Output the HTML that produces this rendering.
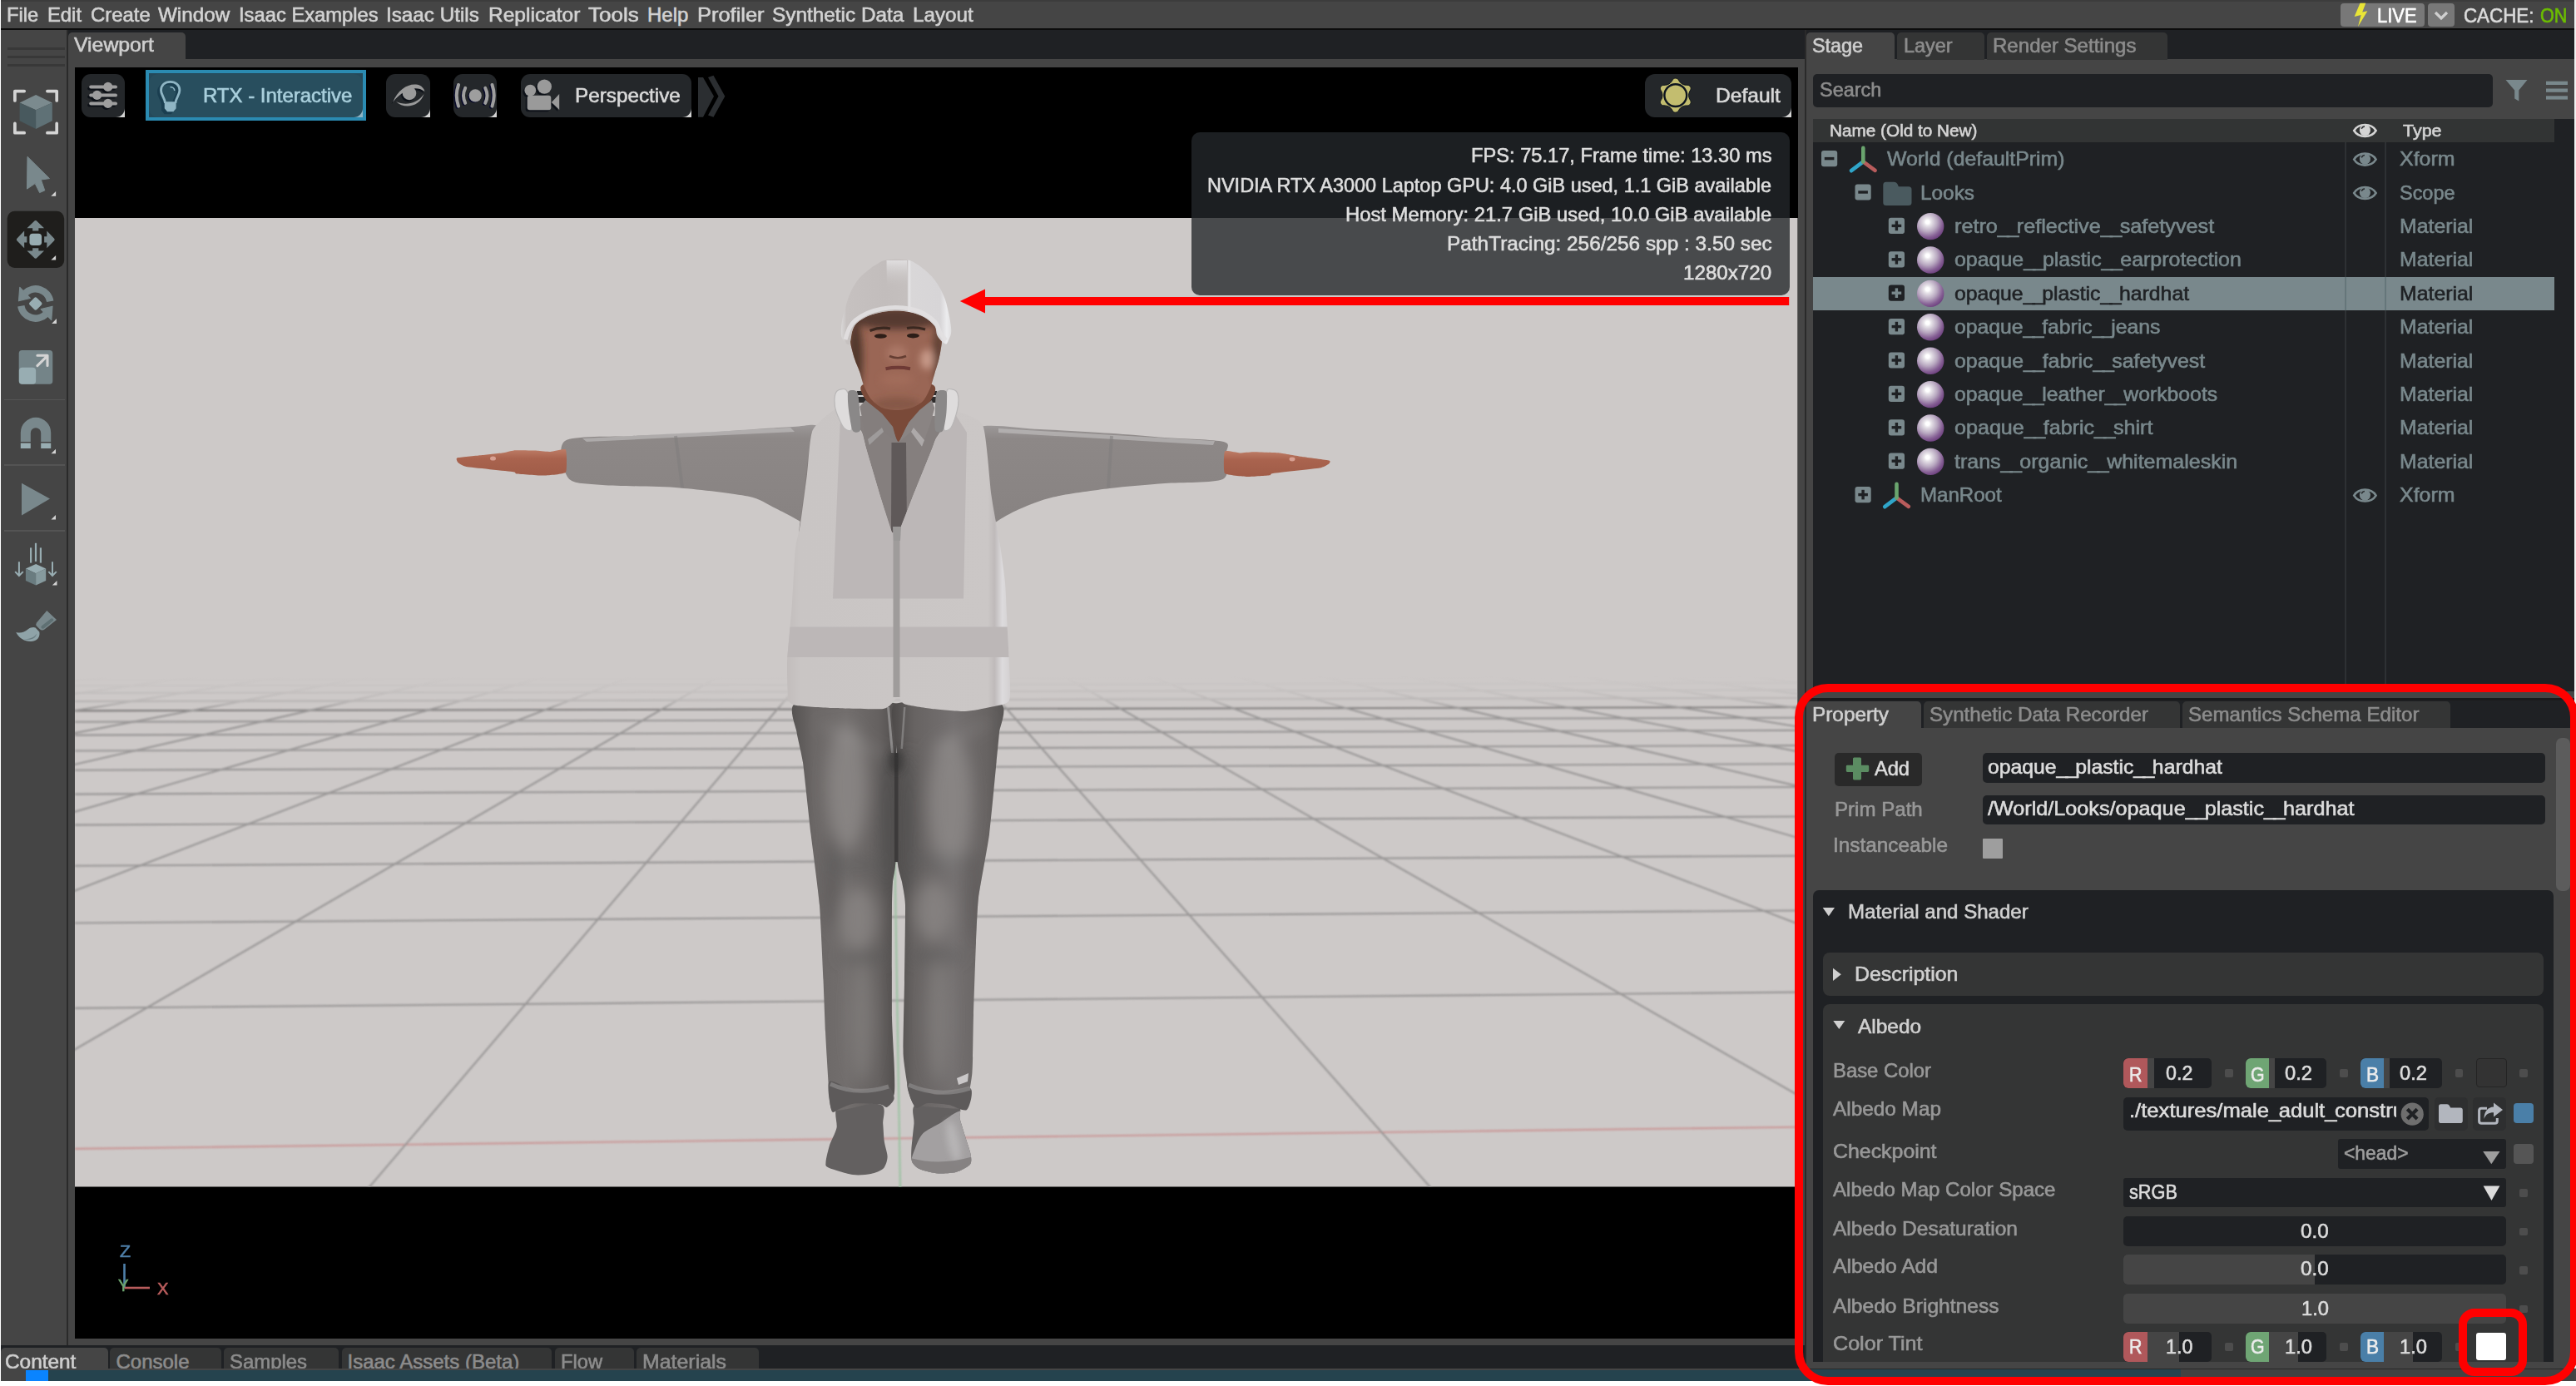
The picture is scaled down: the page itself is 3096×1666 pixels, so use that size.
<!DOCTYPE html><html><head><meta charset="utf-8"><title>Isaac Sim</title><style>
html,body{margin:0;padding:0;background:#fff}
body{width:3096px;height:1666px;position:relative;overflow:hidden;font-family:"Liberation Sans",sans-serif}
.a{position:absolute;display:block}
.t{position:absolute;white-space:nowrap;transform-origin:0 0;line-height:1;display:block;-webkit-text-stroke-width:0.6px}
</style></head><body>
<div class="a" style="left:1.00px;top:0.00px;width:3095.00px;height:1646.00px;background:#454545;"></div>
<div class="a" style="left:1.00px;top:0.00px;width:3095.00px;height:1.50px;background:#3c3c3c;"></div>
<span class="t" style="left:8.40px;top:6.00px;font-size:24px;color:#d2d2d2;transform:scaleX(0.9878);">File</span>
<span class="t" style="left:56.80px;top:6.00px;font-size:24px;color:#d2d2d2;transform:scaleX(0.9914);">Edit</span>
<span class="t" style="left:108.50px;top:6.00px;font-size:24px;color:#d2d2d2;transform:scaleX(0.9967);">Create</span>
<span class="t" style="left:190.00px;top:6.00px;font-size:24px;color:#d2d2d2;transform:scaleX(1.0098);">Window</span>
<span class="t" style="left:286.50px;top:6.00px;font-size:24px;color:#d2d2d2;transform:scaleX(0.9899);">Isaac Examples</span>
<span class="t" style="left:464.40px;top:6.00px;font-size:24px;color:#d2d2d2;transform:scaleX(1.0100);">Isaac Utils</span>
<span class="t" style="left:586.50px;top:6.00px;font-size:24px;color:#d2d2d2;transform:scaleX(1.0217);">Replicator</span>
<span class="t" style="left:707.00px;top:6.00px;font-size:24px;color:#d2d2d2;transform:scaleX(1.0834);">Tools</span>
<span class="t" style="left:778.00px;top:6.00px;font-size:24px;color:#d2d2d2;">Help</span>
<span class="t" style="left:837.60px;top:6.00px;font-size:24px;color:#d2d2d2;transform:scaleX(1.0602);">Profiler</span>
<span class="t" style="left:928.40px;top:6.00px;font-size:24px;color:#d2d2d2;transform:scaleX(1.0148);">Synthetic Data</span>
<span class="t" style="left:1097.00px;top:6.00px;font-size:24px;color:#d2d2d2;transform:scaleX(1.0089);">Layout</span>
<div class="a" style="left:2813.40px;top:3.75px;width:100.60px;height:28.15px;background:#787878;border-radius:4px;"></div>
<svg class="a" style="left:2827.00px;top:3.00px;" width="21.00" height="30.00" viewBox="0 0 21 30"><path d="M9.5 0.7 L16.3 0.7 L12.2 11.6 L18.4 10.2 L7 28.9 L10.6 14.9 L2.6 17 Z" fill="#e9e437"/></svg>
<span class="t" style="left:2856.50px;top:7.00px;font-size:24px;color:#ffffff;transform:scaleX(0.9129);">LIVE</span>
<div class="a" style="left:2918.40px;top:3.75px;width:31.85px;height:28.15px;background:#787878;border-radius:4px;"></div>
<svg class="a" style="left:2918.40px;top:3.75px;" width="32.00" height="28.00" viewBox="0 0 32 28"><path d="M9 11 L16 18 L23 11" fill="none" stroke="#cfcfcf" stroke-width="3.2"/></svg>
<span class="t" style="left:2960.90px;top:7.00px;font-size:24px;color:#dcdcdc;transform:scaleX(0.9302);">CACHE:</span>
<span class="t" style="left:3052.75px;top:7.00px;font-size:24px;color:#6cbd00;transform:scaleX(0.9028);">ON</span>
<div class="a" style="left:1.00px;top:33.50px;width:3093.00px;height:2.70px;background:#0c0c0c;"></div>
<div class="a" style="left:3093.80px;top:0.00px;width:2.20px;height:1660.00px;background:#f2f2f2;"></div>
<div class="a" style="left:80.00px;top:36.20px;width:2.00px;height:1580.80px;background:#2a2a2a;"></div>
<div class="a" style="left:9.00px;top:56.50px;width:68.50px;height:3.00px;background:#383838;"></div>
<div class="a" style="left:9.00px;top:66.50px;width:68.50px;height:3.00px;background:#383838;"></div>
<div class="a" style="left:9.00px;top:76.50px;width:68.50px;height:3.00px;background:#383838;"></div>
<div class="a" style="left:5.00px;top:479.60px;width:73.00px;height:1.60px;background:#545454;"></div>
<div class="a" style="left:5.00px;top:558.20px;width:73.00px;height:1.60px;background:#545454;"></div>
<div class="a" style="left:5.00px;top:637.20px;width:73.00px;height:1.60px;background:#545454;"></div>
<div class="a" style="left:82.00px;top:36.20px;width:2086.75px;height:35.10px;background:#1f2124;"></div>
<div class="a" style="left:82.00px;top:38.50px;width:141.00px;height:32.80px;background:#454545;border-radius:5px 5px 0 0;"></div><span class="t" style="left:88.50px;top:42.00px;font-size:24px;color:#cfcfcf;transform:scaleX(1.0329);">Viewport</span>
<div class="a" style="left:90.00px;top:81.00px;width:2070.50px;height:1528.00px;background:#000;"></div>
<div class="a" style="left:2168.75px;top:36.20px;width:1.75px;height:1609.80px;background:#2a2a2a;"></div>
<div class="a" style="left:2170.50px;top:36.20px;width:923.50px;height:35.30px;background:#1f2124;"></div>
<div class="a" style="left:2170.50px;top:38.50px;width:106.50px;height:33.00px;background:#454545;border-radius:5px 5px 0 0;"></div><span class="t" style="left:2177.50px;top:43.00px;font-size:24px;color:#cfcfcf;transform:scaleX(0.9726);">Stage</span>
<div class="a" style="left:2279.50px;top:38.50px;width:105.00px;height:33.00px;background:#343535;border-radius:5px 5px 0 0;"></div><span class="t" style="left:2287.50px;top:43.00px;font-size:24px;color:#8c8c8c;transform:scaleX(0.9744);">Layer</span>
<div class="a" style="left:2387.50px;top:38.50px;width:217.10px;height:33.00px;background:#343535;border-radius:5px 5px 0 0;"></div><span class="t" style="left:2394.50px;top:43.00px;font-size:24px;color:#8c8c8c;transform:scaleX(1.0023);">Render Settings</span>
<div class="a" style="left:1.00px;top:1617.00px;width:2167.75px;height:27.75px;background:#1f2124;"></div>
<div class="a" style="left:1px;top:1620px;width:128.6px;height:24.75px;overflow:hidden;background:#454545;border-radius:5px 5px 0 0"><span class="t" style="left:4.60px;top:5.00px;font-size:24px;color:#cfcfcf;transform:scaleX(1.0159);">Content</span></div>
<div class="a" style="left:132.4px;top:1620px;width:133.6px;height:24.75px;overflow:hidden;background:#343535;border-radius:5px 5px 0 0"><span class="t" style="left:7.10px;top:5.00px;font-size:24px;color:#8c8c8c;">Console</span></div>
<div class="a" style="left:269px;top:1620px;width:138px;height:24.75px;overflow:hidden;background:#343535;border-radius:5px 5px 0 0"><span class="t" style="left:7.00px;top:5.00px;font-size:24px;color:#8c8c8c;transform:scaleX(0.9959);">Samples</span></div>
<div class="a" style="left:410.8px;top:1620px;width:252.2px;height:24.75px;overflow:hidden;background:#343535;border-radius:5px 5px 0 0"><span class="t" style="left:6.70px;top:5.00px;font-size:24px;color:#8c8c8c;">Isaac Assets (Beta)</span></div>
<div class="a" style="left:667px;top:1620px;width:95px;height:24.75px;overflow:hidden;background:#343535;border-radius:5px 5px 0 0"><span class="t" style="left:6.50px;top:5.00px;font-size:24px;color:#8c8c8c;transform:scaleX(0.9867);">Flow</span></div>
<div class="a" style="left:765px;top:1620px;width:146.70000000000005px;height:24.75px;overflow:hidden;background:#343535;border-radius:5px 5px 0 0"><span class="t" style="left:7.00px;top:5.00px;font-size:24px;color:#8c8c8c;transform:scaleX(1.0374);">Materials</span></div>
<div class="a" style="left:1.00px;top:1644.75px;width:3095.00px;height:14.95px;background:#454545;"></div>
<div class="a" style="left:31.00px;top:1647.20px;width:2137.75px;height:12.50px;background:#25434e;"></div>
<div class="a" style="left:2168.75px;top:1646.00px;width:452.00px;height:13.70px;background:#25434e;"></div>
<div class="a" style="left:2620.75px;top:1646.00px;width:473.25px;height:13.70px;background:#424242;"></div>
<div class="a" style="left:31.00px;top:1647.20px;width:26.75px;height:12.50px;background:#0a84ff;"></div>
<div class="a" style="left:0.00px;top:1659.70px;width:3096.00px;height:6.30px;background:#fff;"></div>
<svg class="a" style="left:0.00px;top:100.00px;" width="80.00" height="700.00" viewBox="0 100 80 700"><g fill="none" stroke="#d4d4d4" stroke-width="3.7" stroke-linecap="round" stroke-linejoin="round"><path d="M29.2 109.6 L17.9 109.6 L17.9 120.89999999999999"/><path d="M56.900000000000006 109.6 L68.2 109.6 L68.2 120.89999999999999"/><path d="M29.2 159.7 L17.9 159.7 L17.9 148.39999999999998"/><path d="M56.900000000000006 159.7 L68.2 159.7 L68.2 148.39999999999998"/></g><path d="M43.1 113.9 L62.8 123.4 L43.1 132.3 L23.6 123.4Z" fill="#7b8a8e"/><path d="M23.6 123.4 L43.1 132.3 L43.1 155.1 L23.6 145.3Z" fill="#48595e"/><path d="M62.8 123.4 L43.1 132.3 L43.1 155.1 L62.8 145.3Z" fill="#5f7176"/><path d="M33 188.3 L32.5 227.1 L42.2 220.6 L47.6 231.6 L53.8 228.9 L49.3 216 L59.5 214.6Z" fill="#79888c" stroke="#79888c" stroke-width="1" stroke-linejoin="round"/><path d="M67.1 229.89999999999998 L67.1 235.7 L61.3 235.7Z" fill="#d4d4d4"/><rect x="8.66" y="253.8" width="68.5" height="68.2" rx="9" fill="#1f1e1c"/><g transform="rotate(0 42.76 287.9)"><path d="M42.76 265.0 Q43.76 265.0 44.76 266.2 L53.06 274.29999999999995 L46.36 274.29999999999995 L46.36 277.5 L39.16 277.5 L39.16 274.29999999999995 L32.459999999999994 274.29999999999995 L40.76 266.2 Q41.76 265.0 42.76 265.0Z" fill="#79888c"/></g><g transform="rotate(90 42.76 287.9)"><path d="M42.76 265.0 Q43.76 265.0 44.76 266.2 L53.06 274.29999999999995 L46.36 274.29999999999995 L46.36 277.5 L39.16 277.5 L39.16 274.29999999999995 L32.459999999999994 274.29999999999995 L40.76 266.2 Q41.76 265.0 42.76 265.0Z" fill="#79888c"/></g><g transform="rotate(180 42.76 287.9)"><path d="M42.76 265.0 Q43.76 265.0 44.76 266.2 L53.06 274.29999999999995 L46.36 274.29999999999995 L46.36 277.5 L39.16 277.5 L39.16 274.29999999999995 L32.459999999999994 274.29999999999995 L40.76 266.2 Q41.76 265.0 42.76 265.0Z" fill="#79888c"/></g><g transform="rotate(270 42.76 287.9)"><path d="M42.76 265.0 Q43.76 265.0 44.76 266.2 L53.06 274.29999999999995 L46.36 274.29999999999995 L46.36 277.5 L39.16 277.5 L39.16 274.29999999999995 L32.459999999999994 274.29999999999995 L40.76 266.2 Q41.76 265.0 42.76 265.0Z" fill="#79888c"/></g><rect x="35.46" y="280.79999999999995" width="14.6" height="14.2" rx="3.8" fill="#98adb2"/><path d="M67.1 306.90000000000003 L67.1 312.6 L61.39999999999999 312.6Z" fill="#d4d4d4"/><path d="M64.39 361.57 A21.9 21.9 0 0 0 27.27 349.51 L33.21 355.45 A13.5 13.5 0 0 1 56.09 362.89Z" fill="#79888c"/><path d="M36.30 358.31 L23.80 345.36 L22.51 361.79Z" fill="#79888c" stroke="#79888c" stroke-width="1.2" stroke-linejoin="round"/><path d="M21.13 368.43 A21.9 21.9 0 0 0 58.25 380.49 L52.31 374.55 A13.5 13.5 0 0 1 29.43 367.11Z" fill="#79888c"/><path d="M49.22 371.69 L61.72 384.64 L63.01 368.21Z" fill="#79888c" stroke="#79888c" stroke-width="1.2" stroke-linejoin="round"/><rect x="36.66" y="358.9" width="12.2" height="12.2" rx="2.2" fill="#98adb2" transform="rotate(45 42.76 365)"/><path d="M68 383.09999999999997 L68 388.9 L62.2 388.9Z" fill="#d4d4d4"/><rect x="22.7" y="421" width="40.6" height="40.8" rx="3.8" fill="#748488"/><rect x="22.9" y="441.8" width="20.2" height="20" rx="3.8" fill="#98adb2"/><path d="M44.9 439.6 L56.3 428.3 M44.9 427.3 L57 427.3 L57 439.4" fill="none" stroke="#d4d4d4" stroke-width="3.1" stroke-linecap="round" stroke-linejoin="round"/><path d="M24.8 531 L24.8 520 A18.2 18.2 0 0 1 61.2 520 L61.2 531 L49.2 531 L49.2 520.5 A6.2 6.2 0 0 0 36.8 520.5 L36.8 531Z" fill="#79888c"/><rect x="24.8" y="532.6" width="12" height="6.4" fill="#98adb2"/><rect x="49.2" y="532.6" width="12" height="6.4" fill="#98adb2"/><path d="M67 539.8 L67 545.3 L61.5 545.3Z" fill="#d4d4d4"/><path d="M26 580.8 L26 619.5 L60 599.6Z" fill="#79888c"/><path d="M67 619.0 L67 624.5 L61.5 624.5Z" fill="#d4d4d4"/><path d="M43.1 677.9 L55.2 683.6 L43.1 689.3 L30.9 683.6Z" fill="#98adb2"/><path d="M30.9 683.6 L43.1 689.3 L43.1 703.6 L30.9 697.9Z" fill="#6a7c80"/><path d="M55.2 683.6 L43.1 689.3 L43.1 703.6 L55.2 697.9Z" fill="#869a9e"/><g stroke="#98adb2" stroke-width="2.2" fill="none"><path d="M37.1 658.4 L37.1 676.6"/><path d="M43 652.8 L43 674.9"/><path d="M48.9 658.4 L48.9 676.6"/></g><g stroke="#98adb2" stroke-width="2" fill="none"><path d="M22.9 675.2 L22.9 691.5 M18.2 687.1 L22.9 692 L27.8 687.1"/><path d="M63 675.2 L63 691.5 M58.3 687.1 L63 692 L67.8 687.1"/></g><path d="M68.5 697.9 L68.5 703.6 L62.8 703.6Z" fill="#d4d4d4"/><path d="M56.3 734 L68 745 L53.5 756.5 Q50.5 758.8 47.5 756 L44 752.5 Q42.6 750.5 44 748.5Z" fill="#79888c"/><path d="M63.2 743.6 Q65.3 745 63.6 746.6 L53 755.3 Q50.8 756.6 49.6 754.8 Q48.8 753.3 50.5 752 L61 743.8 Q62.2 743 63.2 743.6Z" fill="#5f7073"/><path d="M42.6 754.5 C40.5 753.6 37 753.8 33.5 756.5 C29 760 25 761.5 19.3 760 C22 766 29 771.5 37.5 771 C44 770.5 48.5 766.5 47.3 759.5Z" fill="#8fa3a8"/><path d="M28.5 768 C35 768.5 41.5 766.5 44 761.5 C43.5 767 37 770.5 28.5 768Z" fill="#6a7d82"/></svg>
<svg class="a" style="left:90px;top:262px" width="2070.5" height="1164.5" viewBox="90 262 2070.5 1164.5"><defs>
<linearGradient id="gfade" x1="0" y1="0" x2="0" y2="1" gradientUnits="userSpaceOnUse" gradientTransform="translate(0,800) scale(1,140)"><stop offset="0.0857" stop-color="#000000"/><stop offset="0.1571" stop-color="#121212"/><stop offset="0.2214" stop-color="#2b2b2b"/><stop offset="0.2929" stop-color="#545454"/><stop offset="0.3357" stop-color="#999999"/><stop offset="0.3643" stop-color="#f2f2f2"/><stop offset="0.3786" stop-color="#ffffff"/><stop offset="1.0000" stop-color="#ffffff"/></linearGradient>
<mask id="gm" maskUnits="userSpaceOnUse" x="90" y="262" width="2071" height="1165"><rect x="90" y="800" width="2071" height="700" fill="url(#gfade)"/></mask>
<linearGradient id="jeansL" x1="0" y1="0" x2="1" y2="0"><stop offset="0" stop-color="#565352"/><stop offset="0.2" stop-color="#6b6766"/><stop offset="0.5" stop-color="#726e6d"/><stop offset="0.8" stop-color="#656160"/><stop offset="1" stop-color="#4d4a49"/></linearGradient>
<linearGradient id="jeansR" x1="0" y1="0" x2="1" y2="0"><stop offset="0" stop-color="#4d4a49"/><stop offset="0.2" stop-color="#676362"/><stop offset="0.55" stop-color="#747070"/><stop offset="0.85" stop-color="#676362"/><stop offset="1" stop-color="#595655"/></linearGradient>
<linearGradient id="vestg" x1="0" y1="0" x2="1" y2="0"><stop offset="0" stop-color="#c2bdbc"/><stop offset="0.06" stop-color="#c9c5c4"/><stop offset="0.5" stop-color="#cac6c5"/><stop offset="0.9" stop-color="#cbc7c6"/><stop offset="0.93" stop-color="#bfbaba"/><stop offset="0.965" stop-color="#dddbdd"/><stop offset="1" stop-color="#d3d0d1"/></linearGradient>
<linearGradient id="helm" x1="0" y1="0" x2="1" y2="0"><stop offset="0" stop-color="#dad8d8"/><stop offset="0.05" stop-color="#c6c1c0"/><stop offset="0.4" stop-color="#c2bdbc"/><stop offset="0.6" stop-color="#c4bfbe"/><stop offset="0.615" stop-color="#e6e5e7"/><stop offset="0.64" stop-color="#d9d7d8"/><stop offset="0.9" stop-color="#d7d5d7"/><stop offset="0.96" stop-color="#ececee"/><stop offset="1" stop-color="#e0dfe0"/></linearGradient>
<radialGradient id="face" cx="0.5" cy="0.45" r="0.6"><stop offset="0" stop-color="#a77462"/><stop offset="0.55" stop-color="#8b5d4c"/><stop offset="1" stop-color="#4e352c"/></radialGradient>
<linearGradient id="armL" x1="0" y1="0" x2="0" y2="1"><stop offset="0" stop-color="#9c9898"/><stop offset="0.12" stop-color="#8d8887"/><stop offset="1" stop-color="#878281"/></linearGradient>
<linearGradient id="handg" x1="0" y1="0" x2="0" y2="1"><stop offset="0" stop-color="#bd7c66"/><stop offset="0.35" stop-color="#a9634e"/><stop offset="1" stop-color="#a05c48"/></linearGradient>
<filter id="bl" x="-50%" y="-50%" width="200%" height="200%"><feGaussianBlur stdDeviation="9"/></filter><filter id="bl2" x="-50%" y="-50%" width="200%" height="200%"><feGaussianBlur stdDeviation="4"/></filter><filter id="blg" filterUnits="userSpaceOnUse" x="80" y="780" width="2100" height="660"><feGaussianBlur stdDeviation="1.1"/></filter><linearGradient id="ridge" x1="0" y1="0" x2="0" y2="1"><stop offset="0" stop-color="#e0dedf"/><stop offset="1" stop-color="#c8c4c3" stop-opacity="0"/></linearGradient></defs><rect x="90" y="262" width="2070.5" height="1164.5" fill="#cdc9c8"/><g mask="url(#gm)" stroke-width="2.1" opacity="0.85" fill="none" filter="url(#blg)"><line x1="90" y1="1380.9" x2="2160.5" y2="1354.7" stroke="#c98d8d"/><line x1="90" y1="1211.9" x2="2160.5" y2="1192.6" stroke="#8f8d8d"/><line x1="90" y1="1109.5" x2="2160.5" y2="1094.5" stroke="#8f8d8d"/><line x1="90" y1="1040.8" x2="2160.5" y2="1028.7" stroke="#8f8d8d"/><line x1="90" y1="991.6" x2="2160.5" y2="981.5" stroke="#8f8d8d"/><line x1="90" y1="954.6" x2="2160.5" y2="946.0" stroke="#8f8d8d"/><line x1="90" y1="925.7" x2="2160.5" y2="918.3" stroke="#8f8d8d"/><line x1="90" y1="902.5" x2="2160.5" y2="896.1" stroke="#8f8d8d"/><line x1="90" y1="883.6" x2="2160.5" y2="877.9" stroke="#8f8d8d"/><line x1="90" y1="867.8" x2="2160.5" y2="862.8" stroke="#8f8d8d"/><line x1="90" y1="854.4" x2="2160.5" y2="849.9" stroke="#6f6d6d"/><line x1="90" y1="842.9" x2="2160.5" y2="838.9" stroke="#8f8d8d"/><line x1="90" y1="832.9" x2="2160.5" y2="829.3" stroke="#8f8d8d"/><line x1="90" y1="824.2" x2="2160.5" y2="821.0" stroke="#8f8d8d"/><line x1="90" y1="816.5" x2="2160.5" y2="813.6" stroke="#8f8d8d"/><line x1="90" y1="809.6" x2="2160.5" y2="807.0" stroke="#8f8d8d"/><line x1="90" y1="803.5" x2="2160.5" y2="801.1" stroke="#8f8d8d"/><line x1="90" y1="798.0" x2="2160.5" y2="795.8" stroke="#8f8d8d"/><line x1="90" y1="793.0" x2="2160.5" y2="791.0" stroke="#8f8d8d"/><line x1="90" y1="788.4" x2="2160.5" y2="786.7" stroke="#8f8d8d"/><line x1="90" y1="784.3" x2="2160.5" y2="782.7" stroke="#8f8d8d"/><line x1="90" y1="780.5" x2="2160.5" y2="779.1" stroke="#8f8d8d"/><line x1="90" y1="776.9" x2="2160.5" y2="775.7" stroke="#8f8d8d"/><line x1="90" y1="773.7" x2="2160.5" y2="772.6" stroke="#8f8d8d"/><line x1="90" y1="770.7" x2="2160.5" y2="769.7" stroke="#8f8d8d"/><line x1="90" y1="767.9" x2="2160.5" y2="767.1" stroke="#8f8d8d"/><line x1="90" y1="765.3" x2="2160.5" y2="764.6" stroke="#8f8d8d"/><line x1="90" y1="762.9" x2="2160.5" y2="762.3" stroke="#8f8d8d"/><line x1="90" y1="760.7" x2="2160.5" y2="760.1" stroke="#8f8d8d"/><line x1="90" y1="758.5" x2="2160.5" y2="758.1" stroke="#8f8d8d"/><line x1="90" y1="756.6" x2="2160.5" y2="756.1" stroke="#8f8d8d"/><line x1="90" y1="754.7" x2="2160.5" y2="754.3" stroke="#8f8d8d"/><line x1="90" y1="752.9" x2="2160.5" y2="752.7" stroke="#8f8d8d"/><line x1="90" y1="751.2" x2="2160.5" y2="751.1" stroke="#8f8d8d"/><line x1="90" y1="749.7" x2="2160.5" y2="749.5" stroke="#8f8d8d"/><line x1="90" y1="748.2" x2="2160.5" y2="748.1" stroke="#8f8d8d"/><line x1="90" y1="746.7" x2="2160.5" y2="746.7" stroke="#8f8d8d"/><line x1="90" y1="745.4" x2="2160.5" y2="745.4" stroke="#8f8d8d"/><line x1="90" y1="744.1" x2="2160.5" y2="744.2" stroke="#8f8d8d"/><line x1="90" y1="742.9" x2="2160.5" y2="743.0" stroke="#8f8d8d"/><line x1="-38379.8" y1="2164.2" x2="197.9" y2="726.2" stroke="#8f8d8d"/><line x1="-36067.6" y1="2127.2" x2="227.5" y2="726.2" stroke="#8f8d8d"/><line x1="-33873.1" y1="2092.1" x2="257.0" y2="726.2" stroke="#8f8d8d"/><line x1="-31787.6" y1="2058.7" x2="286.5" y2="726.2" stroke="#8f8d8d"/><line x1="-29803.2" y1="2026.9" x2="316.0" y2="726.2" stroke="#8f8d8d"/><line x1="-27912.7" y1="1996.6" x2="345.5" y2="726.3" stroke="#8f8d8d"/><line x1="-26109.5" y1="1967.7" x2="374.9" y2="726.3" stroke="#8f8d8d"/><line x1="-24387.8" y1="1940.1" x2="404.2" y2="726.3" stroke="#8f8d8d"/><line x1="-22742.2" y1="1913.8" x2="433.6" y2="726.3" stroke="#8f8d8d"/><line x1="-21167.7" y1="1888.5" x2="462.9" y2="726.3" stroke="#8f8d8d"/><line x1="-19659.8" y1="1864.4" x2="492.2" y2="726.3" stroke="#8f8d8d"/><line x1="-18214.4" y1="1841.2" x2="521.4" y2="726.3" stroke="#8f8d8d"/><line x1="-16827.6" y1="1819.0" x2="550.6" y2="726.3" stroke="#8f8d8d"/><line x1="-15496.1" y1="1797.7" x2="579.8" y2="726.3" stroke="#8f8d8d"/><line x1="-14216.4" y1="1777.2" x2="608.9" y2="726.4" stroke="#8f8d8d"/><line x1="-12985.8" y1="1757.5" x2="638.0" y2="726.4" stroke="#8f8d8d"/><line x1="-11801.3" y1="1738.5" x2="667.0" y2="726.4" stroke="#8f8d8d"/><line x1="-10660.5" y1="1720.2" x2="696.1" y2="726.4" stroke="#8f8d8d"/><line x1="-9560.9" y1="1702.6" x2="725.1" y2="726.4" stroke="#8f8d8d"/><line x1="-8500.5" y1="1685.6" x2="754.0" y2="726.4" stroke="#8f8d8d"/><line x1="-7477.1" y1="1669.3" x2="783.0" y2="726.4" stroke="#8f8d8d"/><line x1="-6488.8" y1="1653.4" x2="811.8" y2="726.4" stroke="#8f8d8d"/><line x1="-5533.8" y1="1638.1" x2="840.7" y2="726.5" stroke="#8f8d8d"/><line x1="-4610.6" y1="1623.3" x2="869.5" y2="726.5" stroke="#8f8d8d"/><line x1="-3717.4" y1="1609.0" x2="898.3" y2="726.5" stroke="#8f8d8d"/><line x1="-2853.0" y1="1595.2" x2="927.1" y2="726.5" stroke="#8f8d8d"/><line x1="-2015.9" y1="1581.8" x2="955.8" y2="726.5" stroke="#8f8d8d"/><line x1="-1204.8" y1="1568.8" x2="984.5" y2="726.5" stroke="#8f8d8d"/><line x1="-418.6" y1="1556.2" x2="1013.1" y2="726.5" stroke="#8f8d8d"/><line x1="343.9" y1="1544.0" x2="1041.8" y2="726.5" stroke="#8f8d8d"/><line x1="1083.7" y1="1532.1" x2="1070.4" y2="726.5" stroke="#8fbf98"/><line x1="1801.8" y1="1520.6" x2="1098.9" y2="726.6" stroke="#8f8d8d"/><line x1="2499.2" y1="1509.5" x2="1127.4" y2="726.6" stroke="#8f8d8d"/><line x1="3176.8" y1="1498.6" x2="1155.9" y2="726.6" stroke="#8f8d8d"/><line x1="3835.4" y1="1488.1" x2="1184.4" y2="726.6" stroke="#8f8d8d"/><line x1="4475.7" y1="1477.8" x2="1212.8" y2="726.6" stroke="#8f8d8d"/><line x1="5098.5" y1="1467.8" x2="1241.2" y2="726.6" stroke="#8f8d8d"/><line x1="5704.6" y1="1458.1" x2="1269.6" y2="726.6" stroke="#8f8d8d"/><line x1="6294.6" y1="1448.7" x2="1297.9" y2="726.6" stroke="#8f8d8d"/><line x1="6869.1" y1="1439.5" x2="1326.2" y2="726.7" stroke="#8f8d8d"/><line x1="7428.7" y1="1430.5" x2="1354.4" y2="726.7" stroke="#8f8d8d"/><line x1="7974.0" y1="1421.8" x2="1382.7" y2="726.7" stroke="#8f8d8d"/><line x1="8505.6" y1="1413.3" x2="1410.9" y2="726.7" stroke="#8f8d8d"/><line x1="9023.9" y1="1405.0" x2="1439.0" y2="726.7" stroke="#8f8d8d"/><line x1="9529.5" y1="1396.9" x2="1467.2" y2="726.7" stroke="#8f8d8d"/><line x1="10022.8" y1="1389.0" x2="1495.3" y2="726.7" stroke="#8f8d8d"/><line x1="10504.2" y1="1381.2" x2="1523.3" y2="726.7" stroke="#8f8d8d"/><line x1="10974.2" y1="1373.7" x2="1551.4" y2="726.7" stroke="#8f8d8d"/><line x1="11433.2" y1="1366.4" x2="1579.4" y2="726.8" stroke="#8f8d8d"/><line x1="11881.5" y1="1359.2" x2="1607.3" y2="726.8" stroke="#8f8d8d"/><line x1="12319.6" y1="1352.2" x2="1635.3" y2="726.8" stroke="#8f8d8d"/><line x1="12747.7" y1="1345.3" x2="1663.2" y2="726.8" stroke="#8f8d8d"/><line x1="13166.3" y1="1338.6" x2="1691.0" y2="726.8" stroke="#8f8d8d"/><line x1="13575.6" y1="1332.0" x2="1718.9" y2="726.8" stroke="#8f8d8d"/><line x1="13975.9" y1="1325.6" x2="1746.7" y2="726.8" stroke="#8f8d8d"/><line x1="14367.5" y1="1319.4" x2="1774.4" y2="726.8" stroke="#8f8d8d"/><line x1="14750.7" y1="1313.2" x2="1802.2" y2="726.9" stroke="#8f8d8d"/><line x1="15125.8" y1="1307.2" x2="1829.9" y2="726.9" stroke="#8f8d8d"/><line x1="15493.1" y1="1301.3" x2="1857.6" y2="726.9" stroke="#8f8d8d"/><line x1="15852.7" y1="1295.6" x2="1885.2" y2="726.9" stroke="#8f8d8d"/><line x1="16204.9" y1="1289.9" x2="1912.8" y2="726.9" stroke="#8f8d8d"/></g><g><path d="M1007.6 1330.0 C1014.7 1326.3 1051.9 1325.3 1059.0 1328.0 C1066.1 1330.7 1060.7 1344.4 1061.2 1350.3 C1061.7 1356.2 1062.1 1366.7 1062.8 1372.0 C1063.5 1377.3 1066.7 1386.1 1066.6 1390.4 C1066.5 1394.7 1064.4 1401.8 1061.7 1404.5 C1059.0 1407.2 1051.5 1410.0 1046.6 1411.0 C1041.7 1412.0 1031.7 1413.0 1024.9 1412.0 C1018.1 1411.0 1000.0 1405.4 995.7 1403.4 C991.4 1401.4 992.4 1400.4 992.5 1396.9 C992.6 1393.4 995.1 1382.9 996.8 1377.4 C998.5 1371.9 1004.1 1362.1 1005.5 1355.8 C1006.9 1349.5 1000.5 1333.7 1007.6 1330.0 Z" fill="#636060"/><clipPath id="cbr"><path d="M1100.7 1328.0 C1107.6 1325.0 1143.4 1325.7 1150.5 1328.0 C1157.6 1330.3 1152.4 1339.8 1153.7 1344.9 C1155.0 1350.0 1158.5 1360.8 1160.2 1366.6 C1161.9 1372.4 1166.0 1383.7 1166.7 1388.2 C1167.4 1392.7 1167.9 1397.4 1165.6 1400.1 C1163.3 1402.8 1154.5 1407.4 1149.4 1408.8 C1144.3 1410.2 1133.5 1410.8 1127.7 1410.4 C1121.9 1410.0 1110.3 1407.3 1106.1 1405.5 C1101.9 1403.7 1097.8 1399.9 1096.4 1396.9 C1095.0 1393.9 1095.0 1389.0 1095.3 1382.8 C1095.6 1376.6 1097.8 1357.6 1098.5 1350.3 C1099.2 1343.0 1093.8 1331.0 1100.7 1328.0 Z"/></clipPath><path d="M1100.7 1328.0 C1107.6 1325.0 1143.4 1325.7 1150.5 1328.0 C1157.6 1330.3 1152.4 1339.8 1153.7 1344.9 C1155.0 1350.0 1158.5 1360.8 1160.2 1366.6 C1161.9 1372.4 1166.0 1383.7 1166.7 1388.2 C1167.4 1392.7 1167.9 1397.4 1165.6 1400.1 C1163.3 1402.8 1154.5 1407.4 1149.4 1408.8 C1144.3 1410.2 1133.5 1410.8 1127.7 1410.4 C1121.9 1410.0 1110.3 1407.3 1106.1 1405.5 C1101.9 1403.7 1097.8 1399.9 1096.4 1396.9 C1095.0 1393.9 1095.0 1389.0 1095.3 1382.8 C1095.6 1376.6 1097.8 1357.6 1098.5 1350.3 C1099.2 1343.0 1093.8 1331.0 1100.7 1328.0 Z" fill="#636060"/><g clip-path="url(#cbr)"><path d="M1152.0 1336.0 C1146.0 1337.9 1135.7 1346.5 1130.0 1350.0 C1124.3 1353.5 1113.4 1358.3 1109.4 1362.3 C1105.4 1366.3 1101.7 1375.0 1100.0 1380.0 C1098.3 1385.0 1093.0 1395.7 1097.0 1400.0 C1101.0 1404.3 1119.6 1411.3 1130.0 1412.0 C1140.4 1412.7 1169.0 1415.1 1175.0 1405.0 C1181.0 1394.9 1178.1 1345.2 1175.0 1336.0 C1171.9 1326.8 1158.0 1334.1 1152.0 1336.0 Z" fill="#a3a0a1"/><ellipse cx="1146" cy="1372" rx="7" ry="26" fill="#bdbbbc" opacity="0.8" filter="url(#bl2)" transform="rotate(-12 1146 1372)"/><path d="M1094 1392 Q1130 1402 1170 1390 L1170 1415 L1094 1415Z" fill="#7e7b7b" opacity="0.8"/></g><clipPath id="cl"><path d="M956.0 846.0 C966.0 843.2 1067.9 841.1 1078.0 846.0 C1088.1 850.9 1077.1 889.4 1077.0 905.0 C1076.9 920.6 1076.8 1020.1 1076.5 1033.0 C1076.2 1045.9 1073.4 1055.2 1073.0 1060.0 C1072.6 1064.8 1072.1 1076.5 1072.0 1090.0 C1071.9 1103.5 1071.8 1203.2 1072.0 1222.0 C1072.2 1240.8 1077.2 1307.2 1074.5 1316.0 C1071.8 1324.8 1046.2 1326.4 1040.0 1328.0 C1033.8 1329.6 1004.3 1336.8 1000.6 1335.0 C996.9 1333.2 996.7 1314.9 996.0 1307.0 C995.3 1299.1 992.5 1250.8 992.0 1240.0 C991.5 1229.2 990.1 1190.7 989.5 1178.0 C988.9 1165.3 986.2 1102.6 985.0 1088.0 C983.8 1073.4 976.3 1017.3 974.6 1003.0 C972.9 988.7 966.4 926.9 965.0 916.6 C963.6 906.4 958.2 885.9 957.5 880.0 C956.8 874.1 946.0 848.8 956.0 846.0 Z"/></clipPath><clipPath id="cr"><path d="M1076.0 846.0 C1086.3 841.1 1191.6 843.2 1202.0 846.0 C1212.4 848.8 1201.4 874.2 1201.0 880.0 C1200.6 885.8 1198.6 905.8 1197.6 916.0 C1196.6 926.2 1190.8 989.4 1189.0 1003.0 C1187.2 1016.6 1177.3 1068.2 1176.0 1079.0 C1174.7 1089.8 1173.5 1121.2 1173.0 1133.0 C1172.5 1144.8 1170.4 1206.9 1170.0 1220.0 C1169.6 1233.1 1169.3 1280.8 1168.4 1290.0 C1167.5 1299.2 1163.0 1327.6 1159.4 1331.0 C1155.8 1334.4 1130.0 1331.2 1125.0 1331.0 C1120.0 1330.8 1101.8 1329.6 1099.0 1328.0 C1096.2 1326.4 1093.1 1317.1 1092.0 1312.0 C1090.9 1306.9 1086.0 1278.0 1085.6 1267.0 C1085.2 1256.0 1086.8 1194.9 1087.0 1180.0 C1087.2 1165.1 1088.2 1098.0 1088.0 1088.0 C1087.8 1078.0 1084.8 1064.6 1084.0 1060.0 C1083.2 1055.4 1079.0 1045.9 1078.5 1033.0 C1078.0 1020.1 1078.2 920.6 1078.0 905.0 C1077.8 889.4 1065.7 850.9 1076.0 846.0 Z"/></clipPath><path d="M956.0 846.0 C966.0 843.2 1067.9 841.1 1078.0 846.0 C1088.1 850.9 1077.1 889.4 1077.0 905.0 C1076.9 920.6 1076.8 1020.1 1076.5 1033.0 C1076.2 1045.9 1073.4 1055.2 1073.0 1060.0 C1072.6 1064.8 1072.1 1076.5 1072.0 1090.0 C1071.9 1103.5 1071.8 1203.2 1072.0 1222.0 C1072.2 1240.8 1077.2 1307.2 1074.5 1316.0 C1071.8 1324.8 1046.2 1326.4 1040.0 1328.0 C1033.8 1329.6 1004.3 1336.8 1000.6 1335.0 C996.9 1333.2 996.7 1314.9 996.0 1307.0 C995.3 1299.1 992.5 1250.8 992.0 1240.0 C991.5 1229.2 990.1 1190.7 989.5 1178.0 C988.9 1165.3 986.2 1102.6 985.0 1088.0 C983.8 1073.4 976.3 1017.3 974.6 1003.0 C972.9 988.7 966.4 926.9 965.0 916.6 C963.6 906.4 958.2 885.9 957.5 880.0 C956.8 874.1 946.0 848.8 956.0 846.0 Z" fill="url(#jeansL)"/><path d="M1076.0 846.0 C1086.3 841.1 1191.6 843.2 1202.0 846.0 C1212.4 848.8 1201.4 874.2 1201.0 880.0 C1200.6 885.8 1198.6 905.8 1197.6 916.0 C1196.6 926.2 1190.8 989.4 1189.0 1003.0 C1187.2 1016.6 1177.3 1068.2 1176.0 1079.0 C1174.7 1089.8 1173.5 1121.2 1173.0 1133.0 C1172.5 1144.8 1170.4 1206.9 1170.0 1220.0 C1169.6 1233.1 1169.3 1280.8 1168.4 1290.0 C1167.5 1299.2 1163.0 1327.6 1159.4 1331.0 C1155.8 1334.4 1130.0 1331.2 1125.0 1331.0 C1120.0 1330.8 1101.8 1329.6 1099.0 1328.0 C1096.2 1326.4 1093.1 1317.1 1092.0 1312.0 C1090.9 1306.9 1086.0 1278.0 1085.6 1267.0 C1085.2 1256.0 1086.8 1194.9 1087.0 1180.0 C1087.2 1165.1 1088.2 1098.0 1088.0 1088.0 C1087.8 1078.0 1084.8 1064.6 1084.0 1060.0 C1083.2 1055.4 1079.0 1045.9 1078.5 1033.0 C1078.0 1020.1 1078.2 920.6 1078.0 905.0 C1077.8 889.4 1065.7 850.9 1076.0 846.0 Z" fill="url(#jeansR)"/><g clip-path="url(#cl)" filter="url(#bl)"><ellipse cx="1018" cy="945" rx="24" ry="75" fill="#8f8b8a" opacity="0.75"/><ellipse cx="1032" cy="1105" rx="22" ry="38" fill="#8d8988" opacity="0.7"/><ellipse cx="1036" cy="1225" rx="14" ry="75" fill="#878382" opacity="0.6"/><ellipse cx="1000" cy="1060" rx="10" ry="60" fill="#555353" opacity="0.55"/><ellipse cx="1066" cy="990" rx="10" ry="90" fill="#4d4b4b" opacity="0.6"/><ellipse cx="1030" cy="1040" rx="40" ry="10" fill="#5a5858" opacity="0.35"/><ellipse cx="1040" cy="1150" rx="36" ry="9" fill="#5a5858" opacity="0.4"/><path d="M985 870 L1060 905" stroke="#a8a6a6" stroke-width="4" opacity="0.5"/></g><g clip-path="url(#cr)" filter="url(#bl)"><ellipse cx="1142" cy="965" rx="26" ry="80" fill="#8f8b8a" opacity="0.75"/><ellipse cx="1122" cy="1095" rx="22" ry="36" fill="#8d8988" opacity="0.7"/><ellipse cx="1128" cy="1225" rx="14" ry="75" fill="#878382" opacity="0.6"/><ellipse cx="1092" cy="990" rx="10" ry="90" fill="#4d4b4b" opacity="0.6"/><ellipse cx="1172" cy="1080" rx="9" ry="60" fill="#555353" opacity="0.5"/><ellipse cx="1130" cy="1035" rx="40" ry="10" fill="#5a5858" opacity="0.3"/><ellipse cx="1125" cy="1150" rx="36" ry="9" fill="#5a5858" opacity="0.4"/><path d="M1190 868 L1120 900" stroke="#a8a6a6" stroke-width="4" opacity="0.5"/></g><path d="M1075 905 L1079.5 905 L1079.5 1036 L1075 1036Z" fill="#3c3a3a"/><path d="M1066 850 L1069 850 L1074 905 L1071 905Z" fill="#a3a1a1" opacity="0.7"/><path d="M1086 850 L1088.5 850 L1085 900 L1082.5 900Z" fill="#9a9898" opacity="0.6"/><ellipse cx="1077" cy="915" rx="9" ry="14" fill="#2f2d2d" opacity="0.55" filter="url(#bl2)"/><path d="M997.0 1300.0 C1001.1 1296.9 1020.9 1311.3 1030.0 1312.0 C1039.1 1312.7 1059.5 1303.8 1065.5 1304.9 C1071.5 1306.0 1074.6 1316.5 1074.7 1320.0 C1074.8 1323.5 1068.3 1329.9 1066.0 1330.9 C1063.7 1331.9 1062.6 1328.2 1057.4 1327.6 C1052.2 1327.0 1033.5 1325.8 1027.0 1326.5 C1020.5 1327.2 1012.4 1331.8 1008.7 1333.0 C1005.0 1334.2 1001.1 1339.6 999.5 1335.2 C997.9 1330.8 992.9 1303.1 997.0 1300.0 Z" fill="#5d5a5a"/><path d="M1091.0 1302.0 C1094.3 1300.0 1115.0 1315.2 1125.0 1316.0 C1135.0 1316.8 1161.1 1305.6 1166.0 1308.0 C1170.9 1310.4 1165.5 1331.3 1162.0 1334.0 C1158.5 1336.7 1146.3 1329.1 1140.0 1328.0 C1133.7 1326.9 1120.3 1325.6 1115.0 1326.0 C1109.7 1326.4 1103.2 1334.2 1100.0 1331.0 C1096.8 1327.8 1087.7 1304.0 1091.0 1302.0 Z" fill="#5d5a5a"/><path d="M998 1303 Q1030 1318 1068 1306" stroke="#8d8a8a" stroke-width="5" fill="none" opacity="0.7"/><path d="M1092 1304 Q1128 1320 1166 1308" stroke="#8d8a8a" stroke-width="5" fill="none" opacity="0.7"/><path d="M1150 1296 L1164 1290 L1163 1300 L1152 1304Z" fill="#d9d7d8" opacity="0.85"/><path d="M679.0 530.0 C689.2 523.2 735.9 525.5 760.0 524.0 C784.1 522.5 834.3 520.5 860.0 519.0 C885.7 517.5 936.3 513.7 953.0 513.0 C969.7 512.3 980.1 507.7 985.0 514.0 C989.9 520.3 991.3 543.2 990.0 560.0 C988.7 576.8 978.6 631.0 975.0 640.0 C971.4 649.0 968.8 631.5 962.8 627.5 C956.8 623.5 938.5 614.1 930.0 610.0 C921.5 605.9 913.9 599.6 898.8 596.5 C883.7 593.4 840.3 588.2 817.0 586.4 C793.7 584.6 741.8 584.4 724.0 582.9 C706.2 581.4 689.3 582.1 683.3 575.0 C677.3 567.9 668.8 536.8 679.0 530.0 Z" fill="url(#armL)"/><path d="M1175.0 514.0 C1185.7 508.1 1228.8 515.1 1250.0 516.0 C1271.2 516.9 1313.8 519.5 1333.8 520.8 C1353.8 522.1 1381.8 524.7 1400.0 526.0 C1418.2 527.3 1460.8 528.4 1470.6 530.9 C1480.4 533.4 1473.7 539.0 1473.6 545.0 C1473.5 551.0 1479.5 571.2 1469.7 576.0 C1459.9 580.8 1418.1 579.5 1400.0 581.0 C1381.9 582.5 1351.7 584.8 1333.8 587.0 C1315.9 589.2 1280.4 594.1 1265.9 597.4 C1251.4 600.7 1234.2 608.0 1225.0 612.0 C1215.8 616.0 1202.3 623.8 1197.0 627.5 C1191.7 631.2 1188.6 649.0 1185.0 640.0 C1181.4 631.0 1171.3 576.8 1170.0 560.0 C1168.7 543.2 1164.3 519.9 1175.0 514.0 Z" fill="url(#armL)"/><path d="M700 527 L950 514 L955 519 L705 531Z" fill="#c8c6c6" opacity="0.55"/><path d="M1200 515 L1460 530 L1458 535 L1200 520Z" fill="#c8c6c6" opacity="0.55"/><path d="M812 524 L820 586" stroke="#7f7d7d" stroke-width="4" opacity="0.5"/><path d="M1336 524 L1332 586" stroke="#7f7d7d" stroke-width="4" opacity="0.5"/><path d="M549.3 550.4 C551.1 549.8 573.6 547.7 577.3 547.3 C581.0 546.9 602.5 544.6 605.2 544.2 C607.9 543.8 614.9 541.6 617.6 541.4 C620.3 541.2 642.7 541.6 645.6 541.7 C648.5 541.8 659.4 543.1 661.7 543.0 C664.0 542.9 678.8 538.8 680.0 540.5 C681.2 542.2 681.7 565.7 680.0 567.8 C678.3 569.9 658.3 571.5 654.3 571.6 C650.3 571.7 623.2 569.7 620.7 569.4 C618.2 569.1 621.0 567.8 617.0 567.2 C613.0 566.6 564.9 561.7 560.5 561.0 C556.1 560.3 551.3 556.7 550.6 556.0 C549.9 555.3 547.5 551.0 549.3 550.4 Z" fill="url(#handg)"/><path d="M1472.0 542.5 C1473.2 540.9 1487.7 544.4 1490.0 544.5 C1492.3 544.6 1502.8 543.3 1506.0 543.3 C1509.2 543.3 1533.7 544.1 1537.6 544.5 C1541.5 544.9 1561.0 548.4 1565.0 549.0 C1569.0 549.6 1595.7 553.1 1597.8 553.7 C1599.9 554.3 1597.3 557.4 1596.5 558.0 C1595.7 558.6 1590.4 561.8 1586.0 562.5 C1581.6 563.2 1534.0 568.4 1530.0 569.0 C1526.0 569.6 1528.1 571.0 1526.0 571.3 C1523.9 571.6 1502.4 573.2 1498.8 573.0 C1495.2 572.8 1473.8 571.0 1472.0 569.0 C1470.2 567.0 1470.8 544.1 1472.0 542.5 Z" fill="url(#handg)"/><ellipse cx="592.5" cy="551" rx="3.5" ry="2.6" fill="#dca69a" opacity="0.9"/><ellipse cx="1553" cy="552" rx="3.5" ry="2.4" fill="#dca69a" opacity="0.9"/><path d="M1000 500 L1150 500 L1180 520 L1195 640 L960 640 L975 520Z" fill="#857f7e"/><path d="M1030 470 L1126 470 L1128 484 L1028 484Z" fill="#2e2c2c"/><path d="M1031 476 L1125 476" stroke="#d8d6d6" stroke-width="2.2"/><path d="M1038.0 462.0 C1048.1 458.8 1109.6 458.8 1120.0 462.0 C1130.4 465.2 1118.7 480.9 1116.0 486.0 C1113.3 491.1 1103.5 496.5 1100.0 500.0 C1096.5 503.5 1092.7 507.9 1090.0 512.0 C1087.3 516.1 1082.4 530.7 1080.0 531.0 C1077.6 531.3 1074.7 518.1 1072.0 514.0 C1069.3 509.9 1063.7 503.7 1060.0 500.0 C1056.3 496.3 1046.9 491.1 1044.0 486.0 C1041.1 480.9 1027.9 465.2 1038.0 462.0 Z" fill="#7a4a39"/><path d="M1071.5 532 L1089 532 L1090 640 L1071 640Z" fill="#5f5959"/><path d="M1033.3 488.7 L1040.2 481 L1060 497 L1073.1 513 L1077.4 530.3 L1062 519 L1044.8 535 L1038 512Z" fill="#847e7d"/><path d="M1123.3 490.5 L1119.9 481 L1105 493 L1092.2 507.8 L1080 532 L1095 519 L1108 536.8 L1118 510Z" fill="#8a8483"/><path d="M1044.8 535 L1062 519 L1060 514 L1043 528Z" fill="#a5a3a3" opacity="0.8"/><path d="M1108 536.8 L1095 519 L1098 514 L1111 529Z" fill="#b5b3b3" opacity="0.8"/><clipPath id="cv"><path d="M1004.0 492.0 C1008.4 490.2 1016.8 497.3 1020.0 500.0 C1023.2 502.7 1033.5 515.0 1035.6 519.0 C1037.7 523.0 1039.0 531.9 1041.3 540.0 C1043.6 548.1 1055.9 590.0 1059.0 600.0 C1062.1 610.0 1069.9 636.0 1072.0 640.0 C1074.1 644.0 1077.6 644.0 1080.0 640.0 C1082.4 636.0 1091.8 610.0 1095.8 600.0 C1099.8 590.0 1117.1 547.3 1120.0 540.0 C1122.9 532.7 1123.0 530.5 1125.0 527.0 C1127.0 523.5 1137.5 508.2 1140.0 505.0 C1142.5 501.8 1145.9 494.3 1150.0 495.0 C1154.1 495.7 1177.2 501.7 1181.4 511.7 C1185.6 521.7 1189.5 581.3 1191.5 595.4 C1193.5 609.5 1199.9 642.5 1201.6 653.0 C1203.2 663.5 1207.2 691.3 1208.0 700.0 C1208.8 708.7 1209.5 729.7 1210.0 739.7 C1210.5 749.7 1212.7 789.8 1213.0 800.0 C1213.3 810.2 1215.3 837.0 1213.0 842.0 C1210.7 847.0 1195.3 848.7 1190.0 850.0 C1184.7 851.3 1166.7 854.8 1159.7 855.0 C1152.7 855.2 1127.2 852.9 1120.0 852.0 C1112.8 851.1 1091.6 847.9 1087.6 846.5 C1083.6 845.1 1081.2 838.6 1080.0 838.0 C1078.8 837.4 1077.8 839.3 1076.0 840.7 C1074.2 842.1 1069.2 851.0 1061.6 852.0 C1054.0 853.0 1010.4 851.4 1000.0 851.0 C989.6 850.6 962.9 849.0 957.7 848.0 C952.5 847.0 948.8 845.8 947.6 840.7 C946.4 835.7 945.9 805.6 946.0 797.5 C946.1 789.4 948.4 767.2 949.0 760.0 C949.6 752.8 951.3 735.1 952.0 725.0 C952.7 714.9 955.0 668.5 956.0 659.0 C957.0 649.5 960.6 638.9 962.0 630.0 C963.4 621.1 968.5 581.2 970.0 570.0 C971.5 558.8 973.1 525.3 976.5 517.5 C979.9 509.7 999.6 493.8 1004.0 492.0 Z"/></clipPath><path d="M1004.0 492.0 C1008.4 490.2 1016.8 497.3 1020.0 500.0 C1023.2 502.7 1033.5 515.0 1035.6 519.0 C1037.7 523.0 1039.0 531.9 1041.3 540.0 C1043.6 548.1 1055.9 590.0 1059.0 600.0 C1062.1 610.0 1069.9 636.0 1072.0 640.0 C1074.1 644.0 1077.6 644.0 1080.0 640.0 C1082.4 636.0 1091.8 610.0 1095.8 600.0 C1099.8 590.0 1117.1 547.3 1120.0 540.0 C1122.9 532.7 1123.0 530.5 1125.0 527.0 C1127.0 523.5 1137.5 508.2 1140.0 505.0 C1142.5 501.8 1145.9 494.3 1150.0 495.0 C1154.1 495.7 1177.2 501.7 1181.4 511.7 C1185.6 521.7 1189.5 581.3 1191.5 595.4 C1193.5 609.5 1199.9 642.5 1201.6 653.0 C1203.2 663.5 1207.2 691.3 1208.0 700.0 C1208.8 708.7 1209.5 729.7 1210.0 739.7 C1210.5 749.7 1212.7 789.8 1213.0 800.0 C1213.3 810.2 1215.3 837.0 1213.0 842.0 C1210.7 847.0 1195.3 848.7 1190.0 850.0 C1184.7 851.3 1166.7 854.8 1159.7 855.0 C1152.7 855.2 1127.2 852.9 1120.0 852.0 C1112.8 851.1 1091.6 847.9 1087.6 846.5 C1083.6 845.1 1081.2 838.6 1080.0 838.0 C1078.8 837.4 1077.8 839.3 1076.0 840.7 C1074.2 842.1 1069.2 851.0 1061.6 852.0 C1054.0 853.0 1010.4 851.4 1000.0 851.0 C989.6 850.6 962.9 849.0 957.7 848.0 C952.5 847.0 948.8 845.8 947.6 840.7 C946.4 835.7 945.9 805.6 946.0 797.5 C946.1 789.4 948.4 767.2 949.0 760.0 C949.6 752.8 951.3 735.1 952.0 725.0 C952.7 714.9 955.0 668.5 956.0 659.0 C957.0 649.5 960.6 638.9 962.0 630.0 C963.4 621.1 968.5 581.2 970.0 570.0 C971.5 558.8 973.1 525.3 976.5 517.5 C979.9 509.7 999.6 493.8 1004.0 492.0 Z" fill="url(#vestg)"/><path d="M1009 512 L1034 516 L1040 566 L1157 566 L1160 520 L1150 500 L1125 528 L1098 575 L1076 633 L1055 570 L1036 516 Z" fill="none"/><path d="M1009.7 509 L1035.6 519 L1041.3 540 L1059 600 L1072 640 L1080 640 L1095.8 600 L1120 540 L1125 527 L1148 498 L1162 520 L1158 719.5 L1001 719.5 Z" fill="#bcb7b7"/><path d="M947 753.5 L1214 753.5 L1215 790 L945 790Z" fill="#bcb7b7" clip-path="url(#cv)"/><path d="M1073.5 633 L1081.5 633 L1081.5 838 L1073.5 838Z" fill="#9f9c9b"/><path d="M1073 633 L1083 633 L1082 650 L1074 650Z" fill="#9a9897"/><path d="M1006.0 470.0 C1007.7 468.4 1013.9 466.7 1016.0 468.0 C1018.1 469.3 1020.9 475.7 1022.0 480.0 C1023.1 484.3 1023.9 495.1 1024.0 500.0 C1024.1 504.9 1024.3 515.1 1023.0 517.0 C1021.7 518.9 1016.4 516.9 1014.0 514.0 C1011.6 511.1 1006.5 499.5 1005.0 495.0 C1003.5 490.5 1002.9 483.3 1003.0 480.0 C1003.1 476.7 1004.3 471.6 1006.0 470.0 Z" fill="#dedcdc" stroke="#b9b7b7" stroke-width="1.2"/><path d="M1020.0 470.0 C1021.5 468.5 1028.3 468.3 1030.0 471.0 C1031.7 473.7 1032.5 483.9 1033.0 490.0 C1033.5 496.1 1035.1 513.3 1034.0 517.0 C1032.9 520.7 1026.7 520.3 1025.0 518.0 C1023.3 515.7 1021.8 504.8 1021.0 500.0 C1020.2 495.2 1019.1 486.0 1019.0 482.0 C1018.9 478.0 1018.5 471.5 1020.0 470.0 Z" fill="#8a8888"/><path d="M1139.0 468.0 C1140.7 466.7 1147.3 468.4 1149.0 470.0 C1150.7 471.6 1151.9 476.7 1152.0 480.0 C1152.1 483.3 1151.2 490.5 1150.0 495.0 C1148.8 499.5 1145.0 511.1 1143.0 514.0 C1141.0 516.9 1136.2 518.9 1135.0 517.0 C1133.8 515.1 1133.9 504.9 1134.0 500.0 C1134.1 495.1 1135.3 484.3 1136.0 480.0 C1136.7 475.7 1137.3 469.3 1139.0 468.0 Z" fill="#dedcdc" stroke="#b9b7b7" stroke-width="1.2"/><path d="M1126.0 471.0 C1127.7 468.3 1135.4 468.5 1137.0 470.0 C1138.6 471.5 1138.0 478.0 1138.0 482.0 C1138.0 486.0 1137.7 495.2 1137.0 500.0 C1136.3 504.8 1134.7 515.7 1133.0 518.0 C1131.3 520.3 1125.2 520.7 1124.0 517.0 C1122.8 513.3 1123.7 496.1 1124.0 490.0 C1124.3 483.9 1124.3 473.7 1126.0 471.0 Z" fill="#8a8888"/><clipPath id="cf"><path d="M1022.0 410.8 C1021.7 406.2 1023.6 400.0 1024.6 397.0 C1025.6 394.0 1027.5 390.5 1029.8 388.3 C1032.1 386.1 1038.0 382.2 1041.9 380.5 C1045.8 378.8 1054.7 376.2 1059.3 375.3 C1063.9 374.4 1072.0 373.6 1076.6 373.6 C1081.2 373.6 1089.3 374.3 1093.9 375.3 C1098.5 376.3 1107.3 379.2 1111.2 381.4 C1115.1 383.6 1120.8 388.7 1123.3 391.8 C1125.8 394.9 1128.8 402.5 1130.0 405.0 C1131.2 407.5 1132.2 407.3 1132.0 410.8 C1131.8 414.3 1129.7 426.5 1128.5 431.6 C1127.3 436.7 1124.7 444.3 1123.3 448.9 C1121.9 453.5 1119.9 461.8 1118.1 466.2 C1116.3 470.6 1112.4 478.6 1109.5 481.8 C1106.6 485.0 1100.2 488.5 1096.0 490.0 C1091.8 491.5 1082.8 493.0 1078.0 493.0 C1073.2 493.0 1064.1 491.7 1060.0 490.0 C1055.9 488.3 1050.0 483.5 1047.1 480.1 C1044.2 476.7 1040.3 468.9 1038.5 464.5 C1036.7 460.1 1034.8 451.6 1033.3 447.2 C1031.8 442.8 1028.7 436.5 1027.2 431.6 C1025.7 426.7 1022.3 415.4 1022.0 410.8 Z"/></clipPath><path d="M1022.0 410.8 C1021.7 406.2 1023.6 400.0 1024.6 397.0 C1025.6 394.0 1027.5 390.5 1029.8 388.3 C1032.1 386.1 1038.0 382.2 1041.9 380.5 C1045.8 378.8 1054.7 376.2 1059.3 375.3 C1063.9 374.4 1072.0 373.6 1076.6 373.6 C1081.2 373.6 1089.3 374.3 1093.9 375.3 C1098.5 376.3 1107.3 379.2 1111.2 381.4 C1115.1 383.6 1120.8 388.7 1123.3 391.8 C1125.8 394.9 1128.8 402.5 1130.0 405.0 C1131.2 407.5 1132.2 407.3 1132.0 410.8 C1131.8 414.3 1129.7 426.5 1128.5 431.6 C1127.3 436.7 1124.7 444.3 1123.3 448.9 C1121.9 453.5 1119.9 461.8 1118.1 466.2 C1116.3 470.6 1112.4 478.6 1109.5 481.8 C1106.6 485.0 1100.2 488.5 1096.0 490.0 C1091.8 491.5 1082.8 493.0 1078.0 493.0 C1073.2 493.0 1064.1 491.7 1060.0 490.0 C1055.9 488.3 1050.0 483.5 1047.1 480.1 C1044.2 476.7 1040.3 468.9 1038.5 464.5 C1036.7 460.1 1034.8 451.6 1033.3 447.2 C1031.8 442.8 1028.7 436.5 1027.2 431.6 C1025.7 426.7 1022.3 415.4 1022.0 410.8 Z" fill="#9a6655"/><g clip-path="url(#cf)"><g filter="url(#bl2)"><ellipse cx="1077" cy="383" rx="55" ry="13" fill="#4a3229" opacity="0.85"/><ellipse cx="1028" cy="430" rx="9" ry="45" fill="#3f2a22" opacity="0.8"/><ellipse cx="1128" cy="425" rx="7" ry="40" fill="#4a3229" opacity="0.7"/><ellipse cx="1114" cy="432" rx="8" ry="12" fill="#d2a595" opacity="0.8"/><ellipse cx="1078" cy="425" rx="12" ry="10" fill="#b27f6d" opacity="0.7"/><ellipse cx="1078" cy="486" rx="30" ry="8" fill="#6d4436" opacity="0.45"/><ellipse cx="1078" cy="456" rx="20" ry="7" fill="#a7705e" opacity="0.6"/></g><ellipse cx="1058.4" cy="404" rx="7.5" ry="2.8" fill="#2d1e18"/><ellipse cx="1097.4" cy="403.6" rx="7.5" ry="2.8" fill="#2d1e18"/><path d="M1045.5 397.5 Q1058 392.5 1070 395" stroke="#3a2820" stroke-width="3.2" fill="none"/><path d="M1090 394.5 Q1100 392.5 1112 396" stroke="#3a2820" stroke-width="3.2" fill="none"/><path d="M1064.5 443.2 Q1079 440.5 1094 443.2" stroke="#6e3a35" stroke-width="4" fill="none"/><path d="M1069 428 Q1079 432.5 1089 428" stroke="#5e382d" stroke-width="2.6" fill="none" opacity="0.9"/></g><path d="M1065.3 312.4 C1071.5 311.5 1084.3 311.5 1090.4 312.4 C1096.5 313.2 1098.5 315.5 1102.0 317.5 C1105.5 319.5 1108.2 321.7 1111.2 324.2 C1114.2 326.7 1117.4 329.6 1120.0 332.5 C1122.6 335.4 1124.6 338.2 1126.8 341.6 C1129.0 345.0 1131.3 349.3 1133.0 353.0 C1134.7 356.7 1135.8 359.0 1137.2 364.0 C1138.6 369.0 1140.5 377.3 1141.5 383.1 C1142.5 388.9 1143.4 394.6 1143.2 398.7 C1143.0 402.8 1141.8 404.9 1140.6 407.4 C1139.4 409.8 1138.6 414.0 1136.3 413.4 C1134.0 412.8 1129.0 407.5 1126.8 403.9 C1124.6 400.3 1125.9 395.6 1123.3 391.8 C1120.7 388.1 1116.1 384.1 1111.2 381.4 C1106.3 378.6 1099.7 376.6 1093.9 375.3 C1088.1 374.0 1082.4 373.6 1076.6 373.6 C1070.8 373.6 1065.1 374.2 1059.3 375.3 C1053.5 376.4 1046.8 378.3 1041.9 380.5 C1037.0 382.7 1032.7 385.6 1029.8 388.3 C1026.9 391.1 1025.9 393.2 1024.6 397.0 C1023.3 400.8 1022.9 407.9 1022.0 410.8 C1021.1 413.7 1021.0 414.9 1019.4 414.3 C1017.8 413.7 1013.9 410.0 1012.5 407.4 C1011.1 404.8 1010.8 402.8 1010.8 398.7 C1010.8 394.6 1011.4 388.9 1012.5 383.1 C1013.6 377.3 1016.2 369.0 1017.7 364.0 C1019.2 359.0 1020.0 356.4 1021.5 353.0 C1023.0 349.6 1024.5 346.5 1026.4 343.3 C1028.3 340.1 1030.4 336.9 1033.0 334.0 C1035.6 331.1 1038.6 328.7 1041.9 326.0 C1045.2 323.3 1049.1 320.3 1053.0 318.0 C1056.9 315.7 1059.1 313.3 1065.3 312.4 Z" fill="url(#helm)"/><path d="M1065.5 313 L1090 313 L1091 345 L1066 345Z" fill="url(#ridge)"/><path d="M1016.0 408.0 C1016.8 405.7 1019.0 397.8 1021.0 394.0 C1023.0 390.2 1024.5 387.9 1028.0 385.0 C1031.5 382.1 1036.7 378.8 1041.9 376.5 C1047.1 374.2 1053.5 372.4 1059.3 371.3 C1065.1 370.2 1070.8 369.6 1076.6 369.6 C1082.4 369.6 1088.1 370.0 1093.9 371.3 C1099.7 372.6 1106.0 374.5 1111.2 377.4 C1116.4 380.3 1121.9 384.7 1125.0 388.5 C1128.1 392.3 1128.0 396.6 1130.0 400.0 C1132.0 403.4 1135.8 407.5 1137.0 409.0" fill="none" stroke="#e2e0e1" stroke-width="5" opacity="0.9"/></g></svg>
<svg class="a" style="left:138.30px;top:128.70px;" width="12.00" height="12.00" viewBox="0 0 12 12"><path d="M12 0 L12 12 L0 12Z" fill="#d4d4d4"/></svg><div class="a" style="left:98.10px;top:88.60px;width:52.20px;height:52.10px;background:#24272a;border-radius:11px;"></div>
<svg class="a" style="left:98.00px;top:88.00px;" width="53.00" height="53.00" viewBox="98 88 53 53"><g transform="translate(-2,2)" fill="#0c1016"><rect x="107.2" y="102.4" width="33.8" height="4" rx="2"/><circle cx="129.75" cy="104.4" r="5.6"/></g><g transform="translate(-2,2)" fill="#0c1016"><rect x="107.2" y="112.4" width="33.8" height="4" rx="2"/><circle cx="116.6" cy="114.4" r="5.6"/></g><g transform="translate(-2,2)" fill="#0c1016"><rect x="107.2" y="122.4" width="33.8" height="4" rx="2"/><circle cx="129.75" cy="124.4" r="5.6"/></g><g fill="#9e9e9e"><rect x="107.2" y="102.4" width="33.8" height="4" rx="2"/><circle cx="129.75" cy="104.4" r="5.6"/></g><g fill="#9e9e9e"><rect x="107.2" y="112.4" width="33.8" height="4" rx="2"/><circle cx="116.6" cy="114.4" r="5.6"/></g><g fill="#9e9e9e"><rect x="107.2" y="122.4" width="33.8" height="4" rx="2"/><circle cx="129.75" cy="124.4" r="5.6"/></g></svg>
<div class="a" style="left:174.75px;top:84.40px;width:264.75px;height:60.60px;background:#2b8bb2;"></div>
<div class="a" style="left:178.50px;top:88.20px;width:257.20px;height:53.00px;background:#25495a;"></div>
<svg class="a" style="left:423.70px;top:128.70px;" width="12.00" height="12.00" viewBox="0 0 12 12"><path d="M12 0 L12 12 L0 12Z" fill="#8fb4c4"/></svg><div class="a" style="left:179.00px;top:88.60px;width:256.70px;height:52.10px;background:#284e5e;border-radius:11px;"></div>
<svg class="a" style="left:186.00px;top:92.00px;" width="36.00" height="46.00" viewBox="186 92 36 46"><g transform="translate(-3,2.2)" fill="none" stroke="#1a3e50" stroke-width="3"><path d="M198.5 124 C198 117 193.5 114.5 193.5 108.5 C193.5 102 198.5 98.3 204.7 98.3 C210.9 98.3 215.9 102 215.9 108.5 C215.9 114.5 211.4 117 210.9 124"/><path d="M198.5 123 L210.9 123 L210.9 130 L208 133.5 L201.4 133.5 L198.5 130Z" fill="#1a3e50"/></g>
<g fill="none" stroke="#8fb5c4" stroke-width="2.8"><path d="M198.5 124 C198 117 193.5 114.5 193.5 108.5 C193.5 102 198.5 98.3 204.7 98.3 C210.9 98.3 215.9 102 215.9 108.5 C215.9 114.5 211.4 117 210.9 124"/><path d="M204.5 104.8 C207.5 104.6 209.6 106.5 209.8 109" stroke-width="1.6"/><path d="M198.5 123 L210.9 123 L210.9 130 L208 133.5 L201.4 133.5 L198.5 130Z" fill="#8fb5c4" stroke-width="1.5"/></g></svg>
<span class="t" style="left:243.75px;top:103.00px;font-size:24px;color:#a9cfdc;transform:scaleX(0.9980);">RTX - Interactive</span>
<svg class="a" style="left:504.80px;top:128.70px;" width="12.00" height="12.00" viewBox="0 0 12 12"><path d="M12 0 L12 12 L0 12Z" fill="#d4d4d4"/></svg><div class="a" style="left:464.10px;top:88.60px;width:52.70px;height:52.10px;background:#24272a;border-radius:11px;"></div>
<svg class="a" style="left:464.00px;top:88.00px;" width="53.00" height="53.00" viewBox="464 88 53 53"><g transform="translate(-1.5,2)" fill="#0d1118"><path d="M472 123 C478 108 490 100.5 500 101.5 C506 102 509.5 106 510.5 110 C505 106 498 105 491 108 C483 111 477 117 472 123Z"/><circle cx="492" cy="112" r="8.3"/></g>
<g fill="#9a9a9a"><path d="M472 123 C478 108 490 100.5 500 101.5 C506 102 509.5 106 510.5 110 C505 106 498 105 491 108 C483 111 477 117 472 123Z"/><circle cx="492" cy="112" r="8.3"/><path d="M476 122 C486 127 500 126 509.5 113 C505 128 486 132 476 122Z"/></g></svg>
<svg class="a" style="left:585.00px;top:128.70px;" width="12.00" height="12.00" viewBox="0 0 12 12"><path d="M12 0 L12 12 L0 12Z" fill="#d4d4d4"/></svg><div class="a" style="left:545.00px;top:88.60px;width:52.00px;height:52.10px;background:#24272a;border-radius:11px;"></div>
<svg class="a" style="left:545.00px;top:88.00px;" width="53.00" height="53.00" viewBox="545 88 53 53"><g fill="none" stroke="#0a0c2a" stroke-width="4" stroke-linecap="round" transform="translate(-1.5,1)"><path d="M559.2 105.8 Q554.8 114.8 559.2 123.8"/><path d="M583.2 105.8 Q587.8 114.8 583.2 123.8"/><path d="M551.0 102.0 Q546.5 114.8 551.0 127.6"/><path d="M591.5 102.0 Q596.0 114.8 591.5 127.6"/></g><circle cx="569.75" cy="115.8" r="7.6" fill="#0a0c2a"/><g fill="none" stroke="#9e9e9e" stroke-width="4" stroke-linecap="round" transform="translate(0,0)"><path d="M559.2 105.8 Q554.8 114.8 559.2 123.8"/><path d="M583.2 105.8 Q587.8 114.8 583.2 123.8"/><path d="M551.0 102.0 Q546.5 114.8 551.0 127.6"/><path d="M591.5 102.0 Q596.0 114.8 591.5 127.6"/></g><circle cx="571.25" cy="114.8" r="7.6" fill="#9e9e9e"/></svg>
<svg class="a" style="left:819.00px;top:128.70px;" width="12.00" height="12.00" viewBox="0 0 12 12"><path d="M12 0 L12 12 L0 12Z" fill="#d4d4d4"/></svg><div class="a" style="left:625.70px;top:88.60px;width:205.30px;height:52.10px;background:#24272a;border-radius:11px;"></div>
<svg class="a" style="left:628.00px;top:92.00px;" width="48.00" height="45.00" viewBox="628 92 48 45"><g fill="#0d1118" transform="translate(-2,2)"><circle cx="637.3" cy="108.6" r="6.9"/><circle cx="654.3" cy="104.1" r="8.7"/><rect x="633.7" y="114.8" width="28.6" height="17.5" rx="3"/><path d="M662.8 123 L672.2 113 L672.2 132Z"/></g><g fill="#9a9a9a" transform="translate(0,0)"><circle cx="637.3" cy="108.6" r="6.9"/><circle cx="654.3" cy="104.1" r="8.7"/><rect x="633.7" y="114.8" width="28.6" height="17.5" rx="3"/><path d="M662.8 123 L672.2 113 L672.2 132Z"/></g></svg>
<span class="t" style="left:691.40px;top:103.00px;font-size:24px;color:#d9d9d9;transform:scaleX(1.0112);">Perspective</span>
<svg class="a" style="left:838.00px;top:88.00px;" width="36.00" height="56.00" viewBox="838 88 36 56"><path d="M839 93 L845 93 L858 115.7 L845 140.7 L839 140.7Z" fill="#2b2e31"/><path d="M851 93 L857.5 90.7 L871.3 115.7 L857.5 140.7 L851 138.5 L863.5 115.7Z" fill="#2b2e31"/></svg>
<svg class="a" style="left:2141.00px;top:128.70px;" width="12.00" height="12.00" viewBox="0 0 12 12"><path d="M12 0 L12 12 L0 12Z" fill="#d4d4d4"/></svg><div class="a" style="left:1976.70px;top:88.60px;width:176.30px;height:52.10px;background:#24272a;border-radius:12px;"></div>
<svg class="a" style="left:1990.00px;top:92.00px;" width="48.00" height="46.00" viewBox="1990 92 48 46"><path d="M2013.8 94.0 C2018.0 94.0 2016.9 98.2 2021.7 100.9 C2026.5 103.7 2029.5 100.7 2031.6 104.3 C2033.7 107.9 2029.6 109.1 2029.6 114.6 C2029.6 120.1 2033.7 121.3 2031.6 124.9 C2029.5 128.5 2026.5 125.5 2021.7 128.3 C2016.9 131.0 2018.0 135.2 2013.8 135.2 C2009.6 135.2 2010.7 131.0 2005.9 128.3 C2001.1 125.5 1998.1 128.5 1996.0 124.9 C1993.9 121.3 1998.0 120.1 1998.0 114.6 C1998.0 109.1 1993.9 107.9 1996.0 104.3 C1998.1 100.7 2001.1 103.7 2005.9 100.9 C2010.7 98.2 2009.6 94.0 2013.8 94.0 Z" fill="#c3bd6f" stroke="#0e141c" stroke-width="1"/><circle cx="2013.8" cy="114.6" r="13.4" fill="#c3bd6f" stroke="#0e151f" stroke-width="2.4"/></svg>
<span class="t" style="left:2062.30px;top:103.00px;font-size:24px;color:#d9d9d9;transform:scaleX(1.0244);">Default</span>
<div class="a" style="left:1431.60px;top:159.30px;width:719.20px;height:196.00px;background:rgba(36,39,43,0.79);border-radius:10px;"></div>
<span class="t" style="left:1768.00px;top:175.00px;font-size:24px;color:#dedede;transform:scaleX(0.9855);">FPS: 75.17, Frame time: 13.30 ms</span>
<span class="t" style="left:1451.40px;top:211.00px;font-size:24px;color:#dedede;transform:scaleX(0.9781);">NVIDIA RTX A3000 Laptop GPU: 4.0 GiB used, 1.1 GiB available</span>
<span class="t" style="left:1617.40px;top:246.00px;font-size:24px;color:#dedede;transform:scaleX(0.9920);">Host Memory: 21.7 GiB used, 10.0 GiB available</span>
<span class="t" style="left:1738.80px;top:281.00px;font-size:24px;color:#dedede;transform:scaleX(1.0156);">PathTracing: 256/256 spp : 3.50 sec</span>
<span class="t" style="left:2023.30px;top:316.00px;font-size:24px;color:#dedede;transform:scaleX(1.0072);">1280x720</span>
<svg class="a" style="left:140.00px;top:1510.00px;" width="50.00" height="45.00" viewBox="140 1510 50 45"><path d="M149.5 1548 L149.5 1519" stroke="#4e7fa8" stroke-width="2.6"/><path d="M149.5 1548 L180 1548" stroke="#b85c5c" stroke-width="2.6"/></svg>
<span class="t" style="left:144.30px;top:1494.00px;font-size:20px;color:#4e7fa8;transform:scaleX(1.0641);">Z</span>
<span class="t" style="left:188.50px;top:1539.00px;font-size:20px;color:#b85c5c;transform:scaleX(1.0119);">X</span>
<span class="t" style="left:141.50px;top:1535.00px;font-size:20px;color:#6ea56f;transform:scaleX(0.9370);">Y</span>
<div class="a" style="left:2178.75px;top:88.60px;width:817.25px;height:40.00px;background:#1f2124;border-radius:5px;"></div>
<span class="t" style="left:2187.00px;top:96.00px;font-size:24px;color:#8c8c8c;transform:scaleX(0.9764);">Search</span>
<svg class="a" style="left:3008.00px;top:94.00px;" width="30.00" height="30.00" viewBox="0 0 30 30"><path d="M3.5 2 L29.5 2 L19.3 14.5 L19.3 27.5 L14.2 24.6 L14.2 14.5Z" fill="#79888c"/></svg>
<svg class="a" style="left:3059.00px;top:96.00px;" width="28.00" height="26.00" viewBox="0 0 28 26"><rect x="1" y="1.7" width="26" height="4.3" fill="#79888c"/><rect x="1" y="10.5" width="26" height="4.3" fill="#79888c"/><rect x="1" y="19.3" width="26" height="4.3" fill="#79888c"/></svg>
<div class="a" style="left:2178.75px;top:143.25px;width:915.25px;height:687.75px;background:#1f2124;"></div>
<div class="a" style="left:2178.75px;top:143.25px;width:890.75px;height:28.00px;background:#323434;"></div>
<span class="t" style="left:2198.75px;top:147.00px;font-size:20px;color:#d4d4d4;transform:scaleX(1.0371);">Name (Old to New)</span>
<span class="t" style="left:2887.50px;top:147.00px;font-size:20px;color:#d4d4d4;transform:scaleX(1.0724);">Type</span>
<div class="a" style="left:2178.75px;top:332.50px;width:890.75px;height:40.40px;background:#79888c;"></div>
<div class="a" style="left:2818.00px;top:171.25px;width:1.60px;height:659.75px;background:#2e3134;"></div>
<div class="a" style="left:2866.30px;top:171.25px;width:1.60px;height:659.75px;background:#2e3134;"></div>
<div class="a" style="left:2818.00px;top:332.50px;width:1.60px;height:40.40px;background:#65767a;"></div>
<div class="a" style="left:2866.30px;top:332.50px;width:1.60px;height:40.40px;background:#65767a;"></div>
<span class="t" style="left:2268.00px;top:179.00px;font-size:24px;color:#79888c;transform:scaleX(1.0355);">World (defaultPrim)</span>
<span class="t" style="left:2883.80px;top:179.00px;font-size:24px;color:#79888c;transform:scaleX(1.0389);">Xform</span>
<span class="t" style="left:2308.30px;top:220.00px;font-size:24px;color:#79888c;transform:scaleX(1.0149);">Looks</span>
<span class="t" style="left:2883.80px;top:220.00px;font-size:24px;color:#79888c;transform:scaleX(0.9772);">Scope</span>
<span class="t" style="left:2348.60px;top:260.00px;font-size:24px;color:#79888c;transform:scaleX(1.0500);">retro<span style="letter-spacing:-2.40px">__</span>reflective<span style="letter-spacing:-2.40px">__</span>safetyvest</span>
<span class="t" style="left:2883.80px;top:260.00px;font-size:24px;color:#79888c;transform:scaleX(1.0344);">Material</span>
<span class="t" style="left:2348.60px;top:300.00px;font-size:24px;color:#79888c;transform:scaleX(1.0386);">opaque<span style="letter-spacing:-2.40px">__</span>plastic<span style="letter-spacing:-2.40px">__</span>earprotection</span>
<span class="t" style="left:2883.80px;top:300.00px;font-size:24px;color:#79888c;transform:scaleX(1.0344);">Material</span>
<span class="t" style="left:2348.60px;top:341.00px;font-size:24px;color:#1f2124;transform:scaleX(1.0318);">opaque<span style="letter-spacing:-2.40px">__</span>plastic<span style="letter-spacing:-2.40px">__</span>hardhat</span>
<span class="t" style="left:2883.80px;top:341.00px;font-size:24px;color:#1f2124;transform:scaleX(1.0344);">Material</span>
<span class="t" style="left:2348.60px;top:381.00px;font-size:24px;color:#79888c;transform:scaleX(1.0311);">opaque<span style="letter-spacing:-2.40px">__</span>fabric<span style="letter-spacing:-2.40px">__</span>jeans</span>
<span class="t" style="left:2883.80px;top:381.00px;font-size:24px;color:#79888c;transform:scaleX(1.0344);">Material</span>
<span class="t" style="left:2348.60px;top:422.00px;font-size:24px;color:#79888c;transform:scaleX(1.0364);">opaque<span style="letter-spacing:-2.40px">__</span>fabric<span style="letter-spacing:-2.40px">__</span>safetyvest</span>
<span class="t" style="left:2883.80px;top:422.00px;font-size:24px;color:#79888c;transform:scaleX(1.0344);">Material</span>
<span class="t" style="left:2348.60px;top:462.00px;font-size:24px;color:#79888c;transform:scaleX(1.0308);">opaque<span style="letter-spacing:-2.40px">__</span>leather<span style="letter-spacing:-2.40px">__</span>workboots</span>
<span class="t" style="left:2883.80px;top:462.00px;font-size:24px;color:#79888c;transform:scaleX(1.0344);">Material</span>
<span class="t" style="left:2348.60px;top:502.00px;font-size:24px;color:#79888c;transform:scaleX(1.0460);">opaque<span style="letter-spacing:-2.40px">__</span>fabric<span style="letter-spacing:-2.40px">__</span>shirt</span>
<span class="t" style="left:2883.80px;top:502.00px;font-size:24px;color:#79888c;transform:scaleX(1.0344);">Material</span>
<span class="t" style="left:2348.60px;top:543.00px;font-size:24px;color:#79888c;transform:scaleX(1.0413);">trans<span style="letter-spacing:-2.40px">__</span>organic<span style="letter-spacing:-2.40px">__</span>whitemaleskin</span>
<span class="t" style="left:2883.80px;top:543.00px;font-size:24px;color:#79888c;transform:scaleX(1.0344);">Material</span>
<span class="t" style="left:2308.30px;top:583.00px;font-size:24px;color:#79888c;transform:scaleX(1.0032);">ManRoot</span>
<span class="t" style="left:2883.80px;top:583.00px;font-size:24px;color:#79888c;transform:scaleX(1.0389);">Xform</span>
<svg class="a" style="left:2178.00px;top:140.00px;" width="916.00" height="480.00" viewBox="2178 140 916 480"><defs><radialGradient id="sph" cx="0.39" cy="0.34" r="0.72"><stop offset="0" stop-color="#ffffff"/><stop offset="0.09" stop-color="#ffffff"/><stop offset="0.2" stop-color="#e6e2e8"/><stop offset="0.5" stop-color="#b8a8c0"/><stop offset="0.78" stop-color="#855f94"/><stop offset="1" stop-color="#68397a"/></radialGradient></defs><g transform="translate(2842.4,157) scale(1.0)"><path d="M-13.2 0 C-7.5 -9.3 7.5 -9.3 13.2 0 C7.5 9.3 -7.5 9.3 -13.2 0Z" fill="none" stroke="#d4d4d4" stroke-width="2.6"/><circle cx="0" cy="-0.5" r="6.6" fill="#d4d4d4"/><path d="M-4.2 -2.2 A4.6 4.6 0 0 1 -0.5 -5.1" stroke="#1f2124" stroke-width="1.6" fill="none" opacity="0.9"/></g><rect x="2189" y="181.0" width="19.2" height="19.2" rx="3" fill="#79888c"/><rect x="2192.8" y="188.9" width="11.6" height="3.4" fill="#1f2124"/><g stroke-width="4.6" stroke-linecap="round" fill="none"><path d="M2239.3 194.4 L2225.0 205.20000000000002" stroke="#2fa5c9"/><path d="M2239.3 194.4 L2253.6000000000004 204.9" stroke="#b85c5c"/><path d="M2239.3 194.4 L2239.3 177.9" stroke="#6aa56e"/></g><g transform="translate(2842.4,191.6) scale(1.0)"><path d="M-13.2 0 C-7.5 -9.3 7.5 -9.3 13.2 0 C7.5 9.3 -7.5 9.3 -13.2 0Z" fill="none" stroke="#79888c" stroke-width="2.6"/><circle cx="0" cy="-0.5" r="6.6" fill="#79888c"/><path d="M-4.2 -2.2 A4.6 4.6 0 0 1 -0.5 -5.1" stroke="#1f2124" stroke-width="1.6" fill="none" opacity="0.9"/></g><rect x="2229.5" y="221.4" width="19.2" height="19.2" rx="3" fill="#79888c"/><rect x="2233.3" y="229.3" width="11.6" height="3.4" fill="#1f2124"/><path d="M2266.8 218.7 L2276.3 218.7 Q2279.3 218.7 2280.8 221.7 L2281.8 224.2 L2293.8 224.2 Q2297.5 224.2 2297.5 227.7 L2297.5 243.39999999999998 Q2297.5 246.89999999999998 2293.8 246.89999999999998 L2266.8 246.89999999999998 Q2263.3 246.89999999999998 2263.3 243.39999999999998 L2263.3 222.2 Q2263.3 218.7 2266.8 218.7Z" fill="#4a5a5f"/><g transform="translate(2842.4,232.0) scale(1.0)"><path d="M-13.2 0 C-7.5 -9.3 7.5 -9.3 13.2 0 C7.5 9.3 -7.5 9.3 -13.2 0Z" fill="none" stroke="#79888c" stroke-width="2.6"/><circle cx="0" cy="-0.5" r="6.6" fill="#79888c"/><path d="M-4.2 -2.2 A4.6 4.6 0 0 1 -0.5 -5.1" stroke="#1f2124" stroke-width="1.6" fill="none" opacity="0.9"/></g><rect x="2269.8" y="261.79999999999995" width="19.2" height="19.2" rx="3" fill="#79888c"/><rect x="2273.6000000000004" y="269.7" width="11.6" height="3.4" fill="#1f2124"/><rect x="2277.7000000000003" y="265.59999999999997" width="3.4" height="11.6" fill="#1f2124"/><circle cx="2320.2" cy="272.09999999999997" r="16.2" fill="url(#sph)"/><rect x="2269.8" y="302.19999999999993" width="19.2" height="19.2" rx="3" fill="#79888c"/><rect x="2273.6000000000004" y="310.09999999999997" width="11.6" height="3.4" fill="#1f2124"/><rect x="2277.7000000000003" y="305.99999999999994" width="3.4" height="11.6" fill="#1f2124"/><circle cx="2320.2" cy="312.49999999999994" r="16.2" fill="url(#sph)"/><rect x="2269.8" y="342.59999999999997" width="19.2" height="19.2" rx="3" fill="#1f2124"/><rect x="2273.6000000000004" y="350.5" width="11.6" height="3.4" fill="#79888c"/><rect x="2277.7000000000003" y="346.4" width="3.4" height="11.6" fill="#79888c"/><circle cx="2320.2" cy="352.9" r="16.2" fill="url(#sph)"/><rect x="2269.8" y="383.0" width="19.2" height="19.2" rx="3" fill="#79888c"/><rect x="2273.6000000000004" y="390.90000000000003" width="11.6" height="3.4" fill="#1f2124"/><rect x="2277.7000000000003" y="386.8" width="3.4" height="11.6" fill="#1f2124"/><circle cx="2320.2" cy="393.3" r="16.2" fill="url(#sph)"/><rect x="2269.8" y="423.4" width="19.2" height="19.2" rx="3" fill="#79888c"/><rect x="2273.6000000000004" y="431.3" width="11.6" height="3.4" fill="#1f2124"/><rect x="2277.7000000000003" y="427.2" width="3.4" height="11.6" fill="#1f2124"/><circle cx="2320.2" cy="433.7" r="16.2" fill="url(#sph)"/><rect x="2269.8" y="463.79999999999995" width="19.2" height="19.2" rx="3" fill="#79888c"/><rect x="2273.6000000000004" y="471.7" width="11.6" height="3.4" fill="#1f2124"/><rect x="2277.7000000000003" y="467.59999999999997" width="3.4" height="11.6" fill="#1f2124"/><circle cx="2320.2" cy="474.09999999999997" r="16.2" fill="url(#sph)"/><rect x="2269.8" y="504.19999999999993" width="19.2" height="19.2" rx="3" fill="#79888c"/><rect x="2273.6000000000004" y="512.0999999999999" width="11.6" height="3.4" fill="#1f2124"/><rect x="2277.7000000000003" y="507.99999999999994" width="3.4" height="11.6" fill="#1f2124"/><circle cx="2320.2" cy="514.5" r="16.2" fill="url(#sph)"/><rect x="2269.8" y="544.5999999999999" width="19.2" height="19.2" rx="3" fill="#79888c"/><rect x="2273.6000000000004" y="552.4999999999999" width="11.6" height="3.4" fill="#1f2124"/><rect x="2277.7000000000003" y="548.4" width="3.4" height="11.6" fill="#1f2124"/><circle cx="2320.2" cy="554.9" r="16.2" fill="url(#sph)"/><rect x="2229.5" y="585.0" width="19.2" height="19.2" rx="3" fill="#79888c"/><rect x="2233.3" y="592.9" width="11.6" height="3.4" fill="#1f2124"/><rect x="2237.4" y="588.8000000000001" width="3.4" height="11.6" fill="#1f2124"/><g stroke-width="4.6" stroke-linecap="round" fill="none"><path d="M2279.5 598.4 L2265.2 609.1999999999999" stroke="#2fa5c9"/><path d="M2279.5 598.4 L2293.8 608.9" stroke="#b85c5c"/><path d="M2279.5 598.4 L2279.5 581.9" stroke="#6aa56e"/></g><g transform="translate(2842.4,595.6) scale(1.0)"><path d="M-13.2 0 C-7.5 -9.3 7.5 -9.3 13.2 0 C7.5 9.3 -7.5 9.3 -13.2 0Z" fill="none" stroke="#79888c" stroke-width="2.6"/><circle cx="0" cy="-0.5" r="6.6" fill="#79888c"/><path d="M-4.2 -2.2 A4.6 4.6 0 0 1 -0.5 -5.1" stroke="#1f2124" stroke-width="1.6" fill="none" opacity="0.9"/></g></svg>
<div class="a" style="left:2170.50px;top:831.00px;width:923.50px;height:8.00px;background:#454545;"></div>
<div class="a" style="left:2170.50px;top:839.00px;width:923.50px;height:3.00px;background:#1a1a1c;"></div>
<div class="a" style="left:2170.50px;top:842.00px;width:923.50px;height:33.00px;background:#1f2124;"></div>
<div class="a" style="left:2170.50px;top:842.50px;width:138.25px;height:32.50px;background:#454545;border-radius:5px 5px 0 0;"></div><span class="t" style="left:2177.50px;top:847.00px;font-size:24px;color:#cfcfcf;transform:scaleX(1.0143);">Property</span>
<div class="a" style="left:2312.00px;top:842.50px;width:308.00px;height:32.50px;background:#343535;border-radius:5px 5px 0 0;"></div><span class="t" style="left:2318.50px;top:847.00px;font-size:24px;color:#8c8c8c;transform:scaleX(1.0059);">Synthetic Data Recorder</span>
<div class="a" style="left:2622.50px;top:842.50px;width:322.50px;height:32.50px;background:#343535;border-radius:5px 5px 0 0;"></div><span class="t" style="left:2630.00px;top:847.00px;font-size:24px;color:#8c8c8c;transform:scaleX(1.0050);">Semantics Schema Editor</span>
<div class="a" style="left:2205.00px;top:905.00px;width:104.50px;height:39.50px;background:#292929;border-radius:5px;"></div>
<svg class="a" style="left:2218.00px;top:909.00px;" width="30.00" height="30.00" viewBox="0 0 30 30"><path d="M10.4 1.5 L17.6 1.5 Q19 1.5 19 3 L19 10.8 L26.8 10.8 Q28.2 10.8 28.2 12.2 L28.2 17.6 Q28.2 19 26.8 19 L19 19 L19 27 Q19 28.4 17.6 28.4 L10.4 28.4 Q9 28.4 9 27 L9 19 L2.2 19 Q0.8 19 0.8 17.6 L0.8 12.2 Q0.8 10.8 2.2 10.8 L9 10.8 L9 3 Q9 1.5 10.4 1.5Z" fill="#5b8c62"/></svg>
<span class="t" style="left:2253.00px;top:912.00px;font-size:24px;color:#dcdcdc;transform:scaleX(0.9835);">Add</span>
<div class="a" style="left:2382.50px;top:905.00px;width:676.50px;height:35.50px;background:#1f2124;border-radius:5px;"></div>
<span class="t" style="left:2388.75px;top:910.00px;font-size:24px;color:#dcdcdc;transform:scaleX(1.0309);">opaque<span style="letter-spacing:-2.40px">__</span>plastic<span style="letter-spacing:-2.40px">__</span>hardhat</span>
<span class="t" style="left:2205.00px;top:961.00px;font-size:24px;color:#989898;transform:scaleX(1.0036);">Prim Path</span>
<div class="a" style="left:2382.50px;top:955.50px;width:676.50px;height:35.25px;background:#1f2124;border-radius:5px;"></div>
<span class="t" style="left:2389.00px;top:960.00px;font-size:24px;color:#dcdcdc;transform:scaleX(1.0498);">/World/Looks/opaque<span style="letter-spacing:-2.40px">__</span>plastic<span style="letter-spacing:-2.40px">__</span>hardhat</span>
<span class="t" style="left:2203.00px;top:1004.00px;font-size:24px;color:#989898;transform:scaleX(1.0139);">Instanceable</span>
<div class="a" style="left:2382.50px;top:1007.50px;width:24.50px;height:24.25px;background:#9e9e9e;border-radius:1px;"></div>
<div class="a" style="left:3071.50px;top:887.00px;width:17.50px;height:184.00px;background:#5c5c5c;border-radius:7px;"></div>
<div class="a" style="left:2178.75px;top:1070.00px;width:890.25px;height:566.75px;background:#1f2124;border-radius:7px 7px 0 0;"></div>
<svg class="a" style="left:2189.00px;top:1088.00px;" width="18.00" height="16.00" viewBox="0 0 18 16"><path d="M1.7 3 L16 3 L8.85 13.2Z" fill="#d0d0d0"/></svg>
<span class="t" style="left:2221.25px;top:1084.00px;font-size:24px;color:#d0d0d0;transform:scaleX(1.0028);">Material and Shader</span>
<div class="a" style="left:2190.80px;top:1145.00px;width:865.80px;height:52.00px;background:#343535;border-radius:8px;"></div>
<svg class="a" style="left:2201.00px;top:1161.00px;" width="14.00" height="20.00" viewBox="0 0 14 20"><path d="M2 2.7 L2 18 L11.8 10.3Z" fill="#d0d0d0"/></svg>
<span class="t" style="left:2229.00px;top:1159.00px;font-size:24px;color:#d0d0d0;transform:scaleX(1.0362);">Description</span>
<div class="a" style="left:2190.80px;top:1207.40px;width:865.80px;height:429.35px;background:#343535;border-radius:8px 8px 0 0;"></div>
<svg class="a" style="left:2201.00px;top:1224.00px;" width="18.00" height="16.00" viewBox="0 0 18 16"><path d="M2.3 3 L16.3 3 L9.3 13Z" fill="#d0d0d0"/></svg>
<span class="t" style="left:2232.80px;top:1222.00px;font-size:24px;color:#d0d0d0;transform:scaleX(1.0183);">Albedo</span>
<span class="t" style="left:2203.00px;top:1275.00px;font-size:24px;color:#989898;transform:scaleX(0.9939);">Base Color</span>
<span class="t" style="left:2203.00px;top:1321.00px;font-size:24px;color:#989898;transform:scaleX(1.0149);">Albedo Map</span>
<span class="t" style="left:2203.00px;top:1372.00px;font-size:24px;color:#989898;transform:scaleX(1.0369);">Checkpoint</span>
<span class="t" style="left:2203.00px;top:1418.00px;font-size:24px;color:#989898;transform:scaleX(1.0025);">Albedo Map Color Space</span>
<span class="t" style="left:2203.00px;top:1465.00px;font-size:24px;color:#989898;transform:scaleX(1.0208);">Albedo Desaturation</span>
<span class="t" style="left:2203.00px;top:1510.00px;font-size:24px;color:#989898;transform:scaleX(1.0262);">Albedo Add</span>
<span class="t" style="left:2203.00px;top:1558.00px;font-size:24px;color:#989898;transform:scaleX(1.0242);">Albedo Brightness</span>
<span class="t" style="left:2203.00px;top:1603.00px;font-size:24px;color:#989898;transform:scaleX(1.0467);">Color Tint</span>
<div class="a" style="left:2552.30px;top:1272.30px;width:106.00px;height:36.00px;background:#1f2124;border-radius:5px;"></div>
<div class="a" style="left:2576.60px;top:1272.30px;width:12.00px;height:36.00px;background:#454545;"></div>
<div class="a" style="left:2552.30px;top:1272.30px;width:28.30px;height:36.00px;background:#b0585b;border-radius:6px 0 0 6px;"></div>
<span class="t" style="left:2559.00px;top:1280.00px;font-size:24px;color:#ececec;transform:scaleX(0.8943);">R</span>
<span class="t" style="left:2602.60px;top:1278.00px;font-size:24px;color:#dcdcdc;transform:scaleX(0.9711);">0.2</span>
<div class="a" style="left:2699.00px;top:1272.30px;width:97.40px;height:36.00px;background:#1f2124;border-radius:5px;"></div>
<div class="a" style="left:2723.40px;top:1272.30px;width:10.20px;height:36.00px;background:#454545;"></div>
<div class="a" style="left:2699.00px;top:1272.30px;width:28.40px;height:36.00px;background:#6fa574;border-radius:6px 0 0 6px;"></div>
<span class="t" style="left:2704.70px;top:1280.00px;font-size:24px;color:#ececec;transform:scaleX(0.8892);">G</span>
<span class="t" style="left:2745.50px;top:1278.00px;font-size:24px;color:#dcdcdc;transform:scaleX(0.9891);">0.2</span>
<div class="a" style="left:2837.40px;top:1272.30px;width:98.00px;height:36.00px;background:#1f2124;border-radius:5px;"></div>
<div class="a" style="left:2861.50px;top:1272.30px;width:10.90px;height:36.00px;background:#454545;"></div>
<div class="a" style="left:2837.40px;top:1272.30px;width:28.10px;height:36.00px;background:#4a7fa8;border-radius:6px 0 0 6px;"></div>
<span class="t" style="left:2843.90px;top:1280.00px;font-size:24px;color:#ececec;transform:scaleX(0.9432);">B</span>
<span class="t" style="left:2883.60px;top:1278.00px;font-size:24px;color:#dcdcdc;transform:scaleX(0.9891);">0.2</span>
<div class="a" style="left:2673.80px;top:1285.40px;width:9.80px;height:9.80px;background:#4d4d4d;border-radius:2px;"></div>
<div class="a" style="left:2812.00px;top:1285.40px;width:9.80px;height:9.80px;background:#4d4d4d;border-radius:2px;"></div>
<div class="a" style="left:2950.70px;top:1285.40px;width:9.80px;height:9.80px;background:#4d4d4d;border-radius:2px;"></div>
<div class="a" style="left:2976.00px;top:1272.30px;width:36.70px;height:34.50px;background:#333333;border-radius:4px;box-sizing:border-box;border:1.5px solid #242424;"></div>
<div class="a" style="left:3027.80px;top:1285.40px;width:9.80px;height:9.80px;background:#4d4d4d;border-radius:2px;"></div>
<div class="a" style="left:2552.30px;top:1319.10px;width:366.90px;height:39.50px;background:#1f2124;border-radius:5px;"></div>
<div class="a" style="left:2552.3px;top:1319.1px;width:327.5px;height:39.5px;overflow:hidden"><span class="t" style="left:6.70px;top:4.00px;font-size:24px;color:#dcdcdc;transform:scaleX(1.0673);">./textures/male<span style="letter-spacing:-2.40px">_</span>adult<span style="letter-spacing:-2.40px">_</span>construction</span></div>
<svg class="a" style="left:2885.00px;top:1324.50px;" width="28.40" height="28.40" viewBox="0 0 28.4 28.4"><circle cx="14.2" cy="14.2" r="13.6" fill="#6e6e6e"/><path d="M8.3 8.3 L20.1 20.1 M20.1 8.3 L8.3 20.1" stroke="#1f2124" stroke-width="4.2"/></svg>
<div class="a" style="left:2925.70px;top:1319.10px;width:39.90px;height:39.50px;background:#2e2f30;border-radius:5px;"></div>
<svg class="a" style="left:2930.00px;top:1326.00px;" width="31.00" height="26.00" viewBox="0 0 31 26"><path d="M3.5 1.3 L11 1.3 Q13 1.3 14 3.2 L15.2 5.6 L27 5.6 Q29.8 5.6 29.8 8.4 L29.8 21.2 Q29.8 24 27 24 L3.8 24 Q1 24 1 21.2 L1 4 Q1 1.3 3.5 1.3Z" fill="#b2b6be"/></svg>
<div class="a" style="left:2972.30px;top:1319.10px;width:40.00px;height:39.50px;background:#2e2f30;border-radius:5px;"></div>
<svg class="a" style="left:2976.00px;top:1323.00px;" width="34.00" height="32.00" viewBox="0 0 34 32"><path d="M13 9.2 L6.5 9.2 Q3.6 9.2 3.6 12 L3.6 24.5 Q3.6 27.3 6.5 27.3 L22.5 27.3 Q25.3 27.3 25.3 24.5 L25.3 21" fill="none" stroke="#b2b6be" stroke-width="3"/><path d="M21 2.5 L32 11 L21 19.5 L21 14.3 C15 14.3 11.5 16.5 9.5 22 C9.5 13 14 8 21 7.6Z" fill="#b2b6be"/></svg>
<div class="a" style="left:3020.90px;top:1326.20px;width:23.70px;height:24.20px;background:#4a7fa8;border-radius:4px;"></div>
<div class="a" style="left:2810.40px;top:1369.00px;width:201.90px;height:36.00px;background:#1f2124;border-radius:3px;"></div>
<span class="t" style="left:2816.90px;top:1374.00px;font-size:24px;color:#9e9e9e;transform:scaleX(0.9518);">&lt;head&gt;</span>
<svg class="a" style="left:2983.00px;top:1382.00px;" width="24.00" height="20.00" viewBox="0 0 24 20"><path d="M1.2 1.9 L21.5 1.9 L11.3 17.2Z" fill="#9e9e9e"/></svg>
<div class="a" style="left:3020.90px;top:1375.20px;width:23.70px;height:23.80px;background:#555555;border-radius:4px;"></div>
<div class="a" style="left:2552.30px;top:1416.00px;width:460.00px;height:34.50px;background:#1f2124;border-radius:3px;"></div>
<span class="t" style="left:2559.00px;top:1421.00px;font-size:24px;color:#dcdcdc;transform:scaleX(0.9061);">sRGB</span>
<svg class="a" style="left:2983.00px;top:1423.00px;" width="24.00" height="22.00" viewBox="0 0 24 22"><path d="M1.6 2.5 L21.4 2.5 L11.5 20Z" fill="#dcdcdc"/></svg>
<div class="a" style="left:3027.80px;top:1429.00px;width:9.80px;height:9.80px;background:#4d4d4d;border-radius:2px;"></div>
<div class="a" style="left:2552.30px;top:1462.00px;width:460.00px;height:35.60px;background:#1f2124;border-radius:5px;"></div>
<span class="t" style="left:2765.30px;top:1468.00px;font-size:24px;color:#dcdcdc;transform:scaleX(1.0101);">0.0</span>
<div class="a" style="left:3027.80px;top:1475.50px;width:9.80px;height:9.80px;background:#4d4d4d;border-radius:2px;"></div>
<div class="a" style="left:2552.30px;top:1508.00px;width:460.00px;height:36.25px;background:#1f2124;border-radius:5px;"></div>
<div class="a" style="left:2552.30px;top:1508.00px;width:229.70px;height:36.25px;background:#454545;border-radius:5px 0 0 5px;"></div>
<span class="t" style="left:2765.30px;top:1513.00px;font-size:24px;color:#dcdcdc;transform:scaleX(1.0101);">0.0</span>
<div class="a" style="left:3027.80px;top:1521.80px;width:9.80px;height:9.80px;background:#4d4d4d;border-radius:2px;"></div>
<div class="a" style="left:2552.30px;top:1555.00px;width:460.00px;height:36.00px;background:#454545;border-radius:5px;"></div>
<span class="t" style="left:2766.00px;top:1561.00px;font-size:24px;color:#dcdcdc;transform:scaleX(0.9891);">1.0</span>
<div class="a" style="left:3027.80px;top:1568.50px;width:9.80px;height:9.80px;background:#4d4d4d;border-radius:2px;"></div>
<div class="a" style="left:2552.30px;top:1601.25px;width:106.00px;height:35.50px;background:#1f2124;border-radius:5px;"></div>
<div class="a" style="left:2576.60px;top:1601.25px;width:42.40px;height:35.50px;background:#454545;"></div>
<div class="a" style="left:2552.30px;top:1601.25px;width:28.30px;height:35.50px;background:#b0585b;border-radius:6px 0 0 6px;"></div>
<span class="t" style="left:2559.00px;top:1607.00px;font-size:24px;color:#ececec;transform:scaleX(0.8943);">R</span>
<span class="t" style="left:2603.20px;top:1607.00px;font-size:24px;color:#dcdcdc;transform:scaleX(0.9711);">1.0</span>
<div class="a" style="left:2699.00px;top:1601.25px;width:97.40px;height:35.50px;background:#1f2124;border-radius:5px;"></div>
<div class="a" style="left:2723.40px;top:1601.25px;width:38.60px;height:35.50px;background:#454545;"></div>
<div class="a" style="left:2699.00px;top:1601.25px;width:28.40px;height:35.50px;background:#6fa574;border-radius:6px 0 0 6px;"></div>
<span class="t" style="left:2704.70px;top:1607.00px;font-size:24px;color:#ececec;transform:scaleX(0.8892);">G</span>
<span class="t" style="left:2746.10px;top:1607.00px;font-size:24px;color:#dcdcdc;transform:scaleX(0.9891);">1.0</span>
<div class="a" style="left:2837.40px;top:1601.25px;width:98.00px;height:35.50px;background:#1f2124;border-radius:5px;"></div>
<div class="a" style="left:2861.50px;top:1601.25px;width:38.50px;height:35.50px;background:#454545;"></div>
<div class="a" style="left:2837.40px;top:1601.25px;width:28.10px;height:35.50px;background:#4a7fa8;border-radius:6px 0 0 6px;"></div>
<span class="t" style="left:2843.90px;top:1607.00px;font-size:24px;color:#ececec;transform:scaleX(0.9432);">B</span>
<span class="t" style="left:2884.20px;top:1607.00px;font-size:24px;color:#dcdcdc;transform:scaleX(0.9891);">1.0</span>
<div class="a" style="left:2673.80px;top:1614.10px;width:9.80px;height:9.80px;background:#4d4d4d;border-radius:2px;"></div>
<div class="a" style="left:2812.00px;top:1614.10px;width:9.80px;height:9.80px;background:#4d4d4d;border-radius:2px;"></div>
<div class="a" style="left:2950.70px;top:1614.10px;width:9.80px;height:9.80px;background:#4d4d4d;border-radius:2px;"></div>
<div class="a" style="left:2976.25px;top:1602.25px;width:35.75px;height:32.75px;background:#ffffff;border-radius:3px;"></div>
<div class="a" style="left:2170.50px;top:1636.75px;width:923.50px;height:7.75px;background:#454545;"></div>
<div class="a" style="left:2170.50px;top:1644.50px;width:923.50px;height:1.70px;background:#2a2a2a;"></div>
<svg class="a" style="left:1150.00px;top:340.00px;" width="1002.00" height="44.00" viewBox="0 0 1002 44"><path d="M3.8 22 L34 7.4 L34 17 L1000.2 17 L1000.2 26.9 L34 26.9 L34 36.6 Z" fill="#ff0000"/></svg>
<div class="a" style="left:2157px;top:821.7px;width:942.2px;height:843.3px;box-sizing:border-box;border:10.4px solid #ff0000;border-radius:40px"></div>
<div class="a" style="left:2955px;top:1573px;width:82px;height:81px;box-sizing:border-box;border:10px solid #ff0000;border-radius:19px"></div>
</body></html>
